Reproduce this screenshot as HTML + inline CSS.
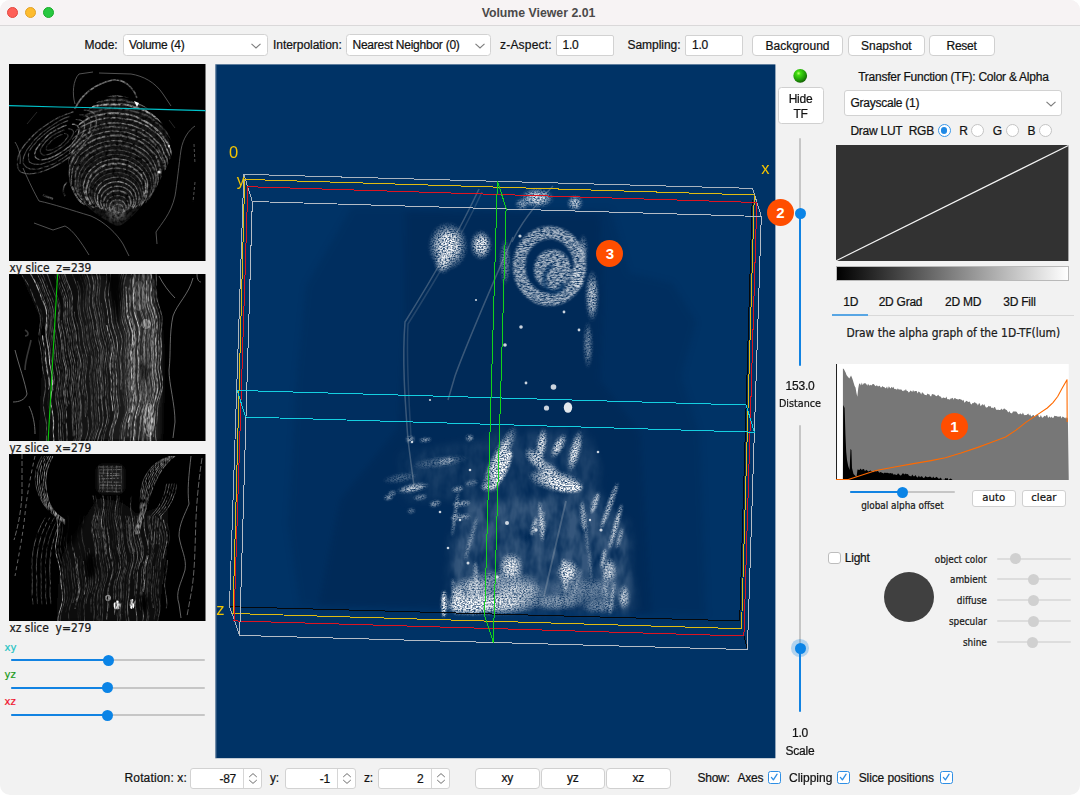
<!DOCTYPE html>
<html lang="en"><head><meta charset="utf-8"><title>Volume Viewer 2.01</title>
<style>
html,body{margin:0;padding:0;background:#fff;}
body{width:1080px;height:795px;overflow:hidden;position:relative;font-family:"Liberation Sans",sans-serif;font-size:12px;letter-spacing:-0.25px;color:#121212;-webkit-text-stroke:0.22px #121212;}
#win{position:absolute;left:0;top:0;width:1080px;height:795px;background:#f2f2f2;border-radius:10px;overflow:hidden;}
#tb{position:absolute;left:0;top:0;width:1080px;height:25px;background:#f7f3f4;border-bottom:1.5px solid #dad8d9;}
#tb .t{position:absolute;left:0;width:1077px;top:5.5px;text-align:center;font-weight:bold;font-size:12.3px;letter-spacing:0;color:#4b4949;-webkit-text-stroke:0;}
.tl{position:absolute;top:6.9px;width:11.2px;height:11.2px;border-radius:50%;box-sizing:border-box;}
.a{position:absolute;white-space:pre;line-height:14px;}
.lg{font-family:"DejaVu Sans Condensed","DejaVu Sans",sans-serif;letter-spacing:0;}
.box{position:absolute;box-sizing:border-box;background:#fff;border:1px solid #d2d2d2;border-radius:3.5px;}
.btn{position:absolute;box-sizing:border-box;background:#fff;border:1px solid #d0d0d0;border-radius:4px;text-align:center;}
.btn span,.box span{position:absolute;white-space:pre;line-height:14px;}
.chev{position:absolute;width:12px;height:8px;}
.trk{position:absolute;height:2px;border-radius:1px;background:#c6c6c6;}
.trkb{position:absolute;height:2px;border-radius:1px;background:#1283e2;}
.vtrk{position:absolute;width:2px;border-radius:1px;background:#c6c6c6;}
.vtrkb{position:absolute;width:2px;border-radius:1px;background:#1283e2;}
.th{position:absolute;width:11px;height:11px;border-radius:50%;background:#0b84e6;}
.thd{position:absolute;width:11px;height:11px;border-radius:50%;background:#d0d0d0;}
.trkd{position:absolute;height:2px;border-radius:1px;background:#dddddd;}
.cb{position:absolute;box-sizing:border-box;width:13px;height:13px;border:1.3px solid #2f8fe4;border-radius:2.5px;background:#fff;}
.rad{position:absolute;box-sizing:border-box;width:13px;height:13px;border:1px solid #c4c4c4;border-radius:50%;background:#fff;}
.badge{-webkit-text-stroke:0;position:absolute;width:27px;height:27px;border-radius:50%;background:#ff4e00;color:#fff;font-weight:bold;font-size:15px;letter-spacing:0;text-align:center;line-height:27px;}
svg{position:absolute;display:block;}
</style></head><body><div id="win">
<div id="tb"><div class="tl" style="left:7px;background:#fe5f57;border:0.6px solid #e2463f"></div><div class="tl" style="left:25.1px;background:#febc2e;border:0.6px solid #e0a028"></div><div class="tl" style="left:43.2px;background:#28c840;border:0.6px solid #1aab29"></div><div class="t">Volume Viewer 2.01</div></div>
<!-- toolbar -->
<div class="a" style="left:84.5px;top:38px;letter-spacing:-0.05px">Mode:</div>
<div class="box" style="left:123px;top:34px;width:145px;height:21.5px"><span style="left:5px;top:3px">Volume (4)</span><svg class="chev" style="left:126px;top:7px" viewBox="0 0 12 8"><path d="M1.5 1.8 L6 6 L10.5 1.8" fill="none" stroke="#7d7d7d" stroke-width="1.1"/></svg></div>
<div class="a" style="left:273px;top:38px;letter-spacing:-0.05px">Interpolation:</div>
<div class="box" style="left:345.5px;top:34px;width:145px;height:21.5px"><span style="left:6px;top:3px">Nearest Neighbor (0)</span><svg class="chev" style="left:127px;top:7px" viewBox="0 0 12 8"><path d="M1.5 1.8 L6 6 L10.5 1.8" fill="none" stroke="#7d7d7d" stroke-width="1.1"/></svg></div>
<div class="a" style="left:500px;top:38px;letter-spacing:0.2px">z-Aspect:</div>
<div class="box" style="left:555.5px;top:34.5px;width:58px;height:21px;border-radius:2px"><span style="left:6px;top:2.5px">1.0</span></div>
<div class="a" style="left:627.5px;top:38px;letter-spacing:-0.05px">Sampling:</div>
<div class="box" style="left:685px;top:34.5px;width:58px;height:21px;border-radius:2px"><span style="left:6px;top:2.5px">1.0</span></div>
<div class="btn" style="left:752px;top:35px;width:90.5px;height:20.5px"><span style="left:12.5px;top:2.5px;letter-spacing:0">Background</span></div>
<div class="btn" style="left:847.5px;top:35px;width:77px;height:20.5px"><span style="left:12.5px;top:2.5px;letter-spacing:0">Snapshot</span></div>
<div class="btn" style="left:929px;top:35px;width:65.5px;height:20.5px"><span style="left:16.5px;top:2.5px">Reset</span></div>
<svg style="left:9px;top:64px;width:196.5px;height:197px" viewBox="0 0 196.5 197"><defs>
<filter id="gxy" x="0" y="0" width="100%" height="100%" color-interpolation-filters="sRGB"><feTurbulence type="fractalNoise" baseFrequency="0.3" numOctaves="2" seed="4" result="n"/><feColorMatrix in="n" type="matrix" values="0 0 0 0 1 0 0 0 0 1 0 0 0 0 1 2.0 0 0 0 -0.3" result="a"/><feComposite in="SourceGraphic" in2="a" operator="in" result="c"/><feGaussianBlur in="c" stdDeviation="0.45"/></filter>
<clipPath id="cxy"><path d="M106 31 C92 32 78 44 70 60 C60 78 58 96 60 114 C62 134 80 150 98 160 C104 164 110 166 114 162 C128 152 142 136 150 118 C158 102 166 92 162 76 C154 54 130 32 106 31 Z"/></clipPath>
<radialGradient id="core"><stop offset="0" stop-color="#bbb" stop-opacity="0.7"/><stop offset="0.6" stop-color="#888" stop-opacity="0.3"/><stop offset="1" stop-color="#555" stop-opacity="0"/></radialGradient>
</defs><rect width="196.5" height="197" fill="#000"/><g filter="url(#gxy)"><path d="M106 33 C92 34 80 46 72 62 C62 80 60 96 62 114 C64 132 82 148 100 158 C106 162 110 163 114 160 C128 150 140 134 148 118 C156 102 164 92 160 76 C152 56 130 34 106 33 Z" fill="#1d1d1d" opacity="0.9"/><g clip-path="url(#cxy)" fill="none" stroke-linecap="round"><path d="M104.0 148.5 L103.7 148.1 L103.4 147.9 L103.2 147.3 L103.1 146.7 L103.1 146.2 L103.1 145.5 L103.2 145.0 L103.3 144.6 L103.4 144.2 L103.7 143.5 L103.9 142.9 L104.3 142.3 L104.6 142.2 L104.9 141.9 L105.4 141.3 L105.8 141.3 L106.2 141.3 L106.8 141.1 L107.3 140.9 L107.9 140.6 L108.4 140.3 L109.0 140.3 L109.5 140.2 L110.0 140.2 L110.5 140.3 L111.0 140.3 L111.5 140.7 L112.0 141.0 L112.5 141.5 L112.9 141.9 L113.3 142.4 L113.6 142.8 L113.9 143.4 L114.1 143.8 L114.3 144.2 L114.5 145.0 L114.6 145.7 L114.7 146.4 L114.7 146.9 L114.5 147.2 L114.3 147.5 L114.1 147.8 L113.8 148.0 L113.5 148.6" stroke="#ababab" stroke-width="1.1" opacity="0.55"/><path d="M101.6 147.3 L101.3 146.3 L100.9 145.9 L100.7 145.1 L100.4 144.8 L100.4 143.8 L100.4 143.0 L100.4 142.5 L100.5 141.7 L100.7 141.1 L101.0 140.2 L101.3 139.7 L101.8 139.0 L102.3 138.4 L102.9 137.7 L103.5 137.2 L104.1 137.0 L104.9 136.5 L105.6 136.4 L106.4 135.9 L107.1 135.8 L107.9 135.8 L108.8 135.8 L109.6 135.8 L110.4 135.9 L111.2 136.3 L112.0 136.7 L112.7 136.9 L113.4 137.3 L114.0 137.7 L114.7 138.4 L115.2 138.7 L115.7 139.5 L116.2 140.3 L116.6 141.0 L116.9 141.9 L117.0 142.3 L117.0 142.8 L117.2 143.8 L117.1 144.6 L117.0 145.3 L116.6 145.7 L116.3 146.1 L115.9 146.8 L115.4 147.2" stroke="#c6c6c6" stroke-width="1.3" opacity="0.55"/><path d="M99.3 146.4 L98.9 145.3 L98.4 144.6 L98.0 143.6 L97.7 142.9 L97.6 141.9 L97.5 141.0 L97.4 140.3 L97.6 139.3 L97.8 138.4 L98.1 137.7 L98.7 136.6 L99.3 135.6 L99.9 135.0 L100.5 134.4 L101.4 133.6 L102.4 132.9 L103.2 132.5 L104.2 132.3 L105.3 131.8 L106.3 131.7 L107.4 131.6 L108.5 131.6 L109.6 131.6 L110.7 131.6 L111.7 131.6 L112.8 132.2 L113.7 132.5 L114.7 133.1 L115.5 133.5 L116.4 134.3 L117.1 135.1 L117.7 135.8 L118.2 136.5 L118.7 137.5 L118.9 138.2 L119.1 139.0 L119.4 140.1 L119.6 141.3 L119.5 142.3 L119.3 143.1 L119.2 144.4 L118.7 145.0 L118.1 145.6 L117.5 146.3" stroke="#b1b1b1" stroke-width="1.2" opacity="0.42"/><path d="M97.0 145.8 L96.3 144.8 L95.5 144.1 L95.2 142.7 L95.0 141.3 L94.7 140.1 L94.7 138.9 L94.6 137.9 L94.8 136.7 L94.9 135.8 L95.3 134.7 L95.8 133.7 L96.5 132.6 L97.4 131.5 L98.4 130.5 L99.5 129.5 L100.6 128.9 L101.8 128.1 L103.0 127.5 L104.3 127.1 L105.6 126.8 L106.9 126.6 L108.2 126.5 L109.5 126.6 L110.8 126.7 L112.1 127.2 L113.5 127.6 L114.6 128.1 L115.9 128.8 L117.0 129.5 L117.9 130.2 L118.8 131.1 L119.5 131.9 L120.3 133.1 L121.1 134.4 L121.4 135.3 L121.7 136.5 L121.7 137.4 L121.9 138.8 L121.8 140.0 L121.5 140.9 L121.0 141.8 L120.5 142.8 L119.9 143.7 L119.3 144.7" stroke="#adadad" stroke-width="1.7" opacity="0.59"/><path d="M94.7 145.5 L93.7 144.3 L93.0 142.9 L92.3 141.8 L92.1 140.0 L91.6 138.8 L91.8 137.0 L91.7 135.7 L91.9 134.3 L92.4 132.8 L92.7 131.6 L93.4 130.2 L94.1 129.0 L94.9 128.0 L96.1 126.8 L97.5 125.7 L98.8 124.8 L100.1 124.1 L101.6 123.4 L103.1 122.8 L104.6 122.6 L106.2 122.4 L107.8 122.2 L109.5 122.4 L111.1 122.5 L112.7 122.9 L114.2 123.3 L115.7 123.8 L117.2 124.6 L118.6 125.6 L119.9 126.6 L121.0 127.6 L122.0 128.8 L122.7 129.9 L123.2 131.1 L123.8 132.4 L124.4 134.0 L124.8 135.6 L124.9 137.1 L125.0 138.8 L124.5 140.0 L123.9 141.1 L123.3 142.4 L122.5 143.5 L121.6 144.5" stroke="#acacac" stroke-width="1.3" opacity="0.66"/><path d="M92.5 144.8 L91.4 143.6 L90.3 142.3 L89.5 140.7 L89.1 138.9 L88.6 137.4 L88.6 135.5 L88.6 133.9 L88.7 132.2 L89.2 130.4 L89.9 128.8 L90.5 127.3 L91.4 125.8 L92.5 124.5 L93.8 123.1 L95.3 121.9 L96.6 120.9 L98.3 119.9 L99.9 119.2 L101.7 118.6 L103.5 118.2 L105.5 117.9 L107.4 117.7 L109.3 117.7 L111.2 118.0 L113.0 118.3 L114.8 118.8 L116.4 119.4 L118.2 120.3 L119.7 121.2 L121.2 122.4 L122.6 123.7 L123.8 125.0 L124.6 126.3 L125.3 127.7 L126.2 129.4 L126.7 131.1 L127.2 133.0 L127.3 134.6 L127.5 136.6 L126.9 137.9 L126.6 139.8 L126.0 141.5 L124.9 142.7 L123.9 144.0" stroke="#d4d4d4" stroke-width="1.3" opacity="0.63"/><path d="M90.7 143.8 L89.2 142.7 L88.4 140.6 L87.5 139.0 L86.7 137.3 L86.2 135.4 L85.7 133.8 L85.8 131.7 L86.1 129.7 L86.2 128.1 L87.1 126.0 L87.7 124.4 L88.6 122.7 L89.6 121.2 L91.3 119.6 L93.0 118.1 L94.7 116.9 L96.7 115.8 L98.6 114.9 L100.5 114.2 L102.5 113.7 L104.7 113.3 L106.9 113.2 L109.1 113.2 L111.2 113.4 L113.3 113.8 L115.3 114.3 L117.3 115.1 L119.2 116.0 L121.2 117.2 L122.7 118.4 L124.4 119.8 L125.7 121.3 L126.6 122.8 L127.6 124.5 L128.5 126.4 L129.4 128.5 L129.7 130.3 L130.1 132.5 L130.2 134.6 L129.7 136.5 L129.2 138.4 L128.3 140.0 L127.5 142.0 L126.3 143.6" stroke="#d0d0d0" stroke-width="1.1" opacity="0.51"/><path d="M88.6 143.7 L87.2 141.7 L85.8 140.1 L84.7 138.3 L83.8 136.2 L83.0 134.4 L82.7 132.2 L82.8 129.8 L83.1 127.6 L83.3 125.6 L83.7 123.7 L84.9 121.5 L85.8 119.6 L86.9 117.8 L88.6 116.1 L90.4 114.5 L92.5 113.0 L94.6 111.8 L96.8 110.7 L99.0 109.9 L101.5 109.3 L103.9 108.8 L106.4 108.6 L108.8 108.6 L111.3 108.8 L113.8 109.3 L116.1 109.9 L118.5 110.8 L120.5 111.8 L122.5 113.0 L124.4 114.4 L126.3 116.0 L128.1 117.8 L129.2 119.6 L130.3 121.5 L130.8 123.4 L131.5 125.4 L132.1 127.7 L132.5 130.1 L132.3 132.2 L131.8 134.2 L131.0 136.0 L130.3 138.1 L129.5 140.5 L127.9 141.9" stroke="#7a7a7a" stroke-width="1.0" opacity="0.48"/><path d="M87.0 142.7 L85.4 140.7 L83.7 139.1 L82.7 136.8 L81.7 134.6 L80.9 132.4 L80.4 130.1 L79.9 128.0 L80.0 125.6 L80.2 123.3 L80.8 121.0 L81.6 118.8 L83.3 116.4 L84.7 114.4 L86.2 112.5 L88.1 110.7 L90.3 109.1 L92.4 107.7 L94.9 106.5 L97.6 105.6 L100.3 104.9 L103.0 104.4 L105.8 104.1 L108.5 104.1 L111.3 104.3 L114.0 104.7 L116.6 105.4 L119.1 106.4 L121.5 107.5 L124.0 108.9 L125.9 110.4 L128.0 112.1 L129.5 114.0 L130.7 115.9 L132.3 118.1 L133.0 120.2 L133.5 122.4 L133.9 124.7 L134.2 127.1 L134.5 129.8 L134.2 132.2 L133.7 134.7 L132.5 136.7 L131.5 139.0 L130.2 141.3" stroke="#848484" stroke-width="1.2" opacity="0.74"/><path d="M84.6 143.4 L82.4 141.7 L81.1 138.9 L79.7 136.5 L78.4 134.2 L77.7 131.6 L77.0 129.0 L77.2 126.1 L77.6 123.2 L78.3 120.5 L79.3 117.9 L80.0 115.5 L81.1 113.2 L82.5 111.0 L84.5 108.9 L86.6 107.0 L88.9 105.3 L91.0 103.7 L93.4 102.4 L96.1 101.2 L99.1 100.5 L102.1 100.0 L105.1 99.5 L108.2 99.5 L111.2 99.7 L114.2 100.2 L117.1 101.0 L119.9 101.9 L122.6 103.2 L125.2 104.7 L127.2 106.3 L129.5 108.2 L131.7 110.3 L133.1 112.5 L134.4 114.8 L135.8 117.3 L136.5 119.9 L136.7 122.3 L136.7 124.7 L136.7 127.4 L135.9 129.7 L135.7 132.7 L135.0 135.5 L133.9 138.0 L132.5 140.6" stroke="#c8c8c8" stroke-width="1.8" opacity="0.68"/><path d="M83.4 142.3 L81.2 140.2 L79.4 137.7 L77.5 135.5 L76.4 132.7 L75.8 129.6 L74.8 127.1 L74.8 124.1 L74.3 121.5 L75.1 118.5 L75.9 115.6 L76.8 113.0 L78.2 110.3 L79.8 107.9 L81.9 105.5 L84.2 103.4 L86.7 101.5 L89.1 99.8 L91.9 98.3 L95.0 97.2 L97.9 96.1 L101.0 95.4 L104.3 94.9 L107.7 94.9 L111.0 95.2 L114.4 95.6 L117.6 96.4 L120.5 97.6 L123.5 98.9 L126.1 100.5 L128.4 102.3 L130.8 104.3 L133.0 106.5 L134.6 108.8 L135.9 111.3 L137.2 113.9 L138.3 116.7 L138.6 119.4 L138.6 122.1 L138.5 124.8 L138.2 127.7 L137.7 130.6 L136.9 133.7 L135.7 136.5 L133.6 138.4" stroke="#999999" stroke-width="1.2" opacity="0.85"/><path d="M81.5 142.5 L79.1 140.1 L76.6 138.1 L74.8 135.3 L72.9 132.7 L71.8 129.6 L70.9 126.6 L71.1 123.0 L71.1 119.8 L71.2 116.8 L72.5 113.4 L73.2 110.6 L75.0 107.6 L76.8 104.8 L79.2 102.2 L81.5 99.9 L84.0 97.7 L87.1 95.9 L89.8 94.2 L93.1 92.8 L96.5 91.7 L100.0 90.9 L103.6 90.5 L107.3 90.5 L110.9 90.6 L114.5 91.1 L117.9 92.0 L121.4 93.1 L124.5 94.5 L127.2 96.3 L129.9 98.2 L132.2 100.4 L134.3 102.7 L136.7 105.3 L138.4 108.1 L140.2 111.1 L141.5 114.2 L141.6 117.0 L142.5 120.5 L142.8 123.9 L141.7 126.6 L141.3 130.0 L139.9 132.9 L138.3 135.6 L136.8 138.8" stroke="#979797" stroke-width="1.0" opacity="0.45"/><path d="M79.2 142.2 L76.3 140.0 L74.4 136.7 L72.0 134.2 L70.8 130.7 L69.4 127.6 L69.2 123.9 L68.8 120.5 L69.2 117.0 L69.1 113.9 L70.0 110.5 L71.4 107.3 L73.0 104.2 L75.1 101.3 L77.2 98.6 L79.5 96.1 L82.1 93.7 L85.1 91.7 L88.4 89.9 L91.8 88.4 L95.4 87.1 L99.3 86.5 L103.2 86.1 L107.1 86.1 L110.9 86.2 L114.8 86.8 L118.4 87.7 L122.1 88.8 L125.8 90.3 L128.9 92.1 L132.0 94.2 L135.0 96.6 L137.6 99.2 L139.4 102.0 L141.0 104.9 L142.2 108.0 L143.9 111.4 L144.5 114.7 L145.0 118.2 L144.5 121.3 L144.2 124.8 L143.4 128.2 L141.6 130.9 L139.7 133.7 L137.4 136.1" stroke="#7c7c7c" stroke-width="1.1" opacity="0.67"/><path d="M77.7 140.6 L75.3 137.5 L72.6 135.0 L70.4 132.0 L68.5 129.0 L67.3 125.4 L66.4 122.0 L66.3 118.2 L66.3 114.6 L66.3 111.3 L66.7 107.9 L68.5 104.3 L70.5 100.9 L72.0 97.9 L74.3 94.9 L76.7 92.2 L80.1 89.7 L83.4 87.5 L87.1 85.7 L90.6 84.0 L94.6 82.9 L98.6 81.9 L102.7 81.2 L107.0 81.2 L111.2 81.4 L115.4 81.9 L119.6 82.8 L123.5 84.2 L127.1 85.9 L130.3 88.0 L133.9 90.2 L136.4 92.8 L138.7 95.6 L141.2 98.6 L143.2 101.7 L145.0 105.1 L145.9 108.5 L147.0 112.2 L146.8 115.5 L146.4 118.9 L146.2 122.7 L144.8 125.8 L143.4 129.1 L142.1 132.7 L140.2 136.1" stroke="#9c9c9c" stroke-width="1.8" opacity="0.51"/><path d="M75.1 140.7 L72.3 137.5 L69.3 134.9 L67.3 131.3 L65.6 127.7 L64.1 124.1 L62.7 120.6 L62.1 116.8 L62.5 112.7 L63.0 108.8 L63.3 105.2 L64.9 101.4 L67.1 97.8 L68.8 94.4 L71.2 91.2 L74.3 88.2 L78.1 85.7 L81.4 83.3 L85.5 81.4 L89.4 79.7 L93.6 78.3 L97.9 77.3 L102.3 76.6 L106.8 76.6 L111.3 76.9 L115.6 77.7 L119.9 78.7 L123.9 80.2 L127.6 82.1 L131.3 84.1 L135.2 86.3 L138.6 89.0 L141.1 92.0 L143.1 95.1 L144.9 98.5 L146.4 101.9 L147.2 105.4 L148.7 109.3 L149.1 113.1 L149.2 117.0 L148.5 120.7 L147.6 124.5 L146.0 128.0 L144.0 131.3 L141.4 134.2" stroke="#a0a0a0" stroke-width="1.1" opacity="0.72"/><path d="M73.5 139.3 L70.0 136.7 L67.1 133.6 L65.1 129.8 L63.5 125.8 L61.6 122.3 L60.5 118.3 L59.7 114.4 L59.8 110.3 L60.5 106.1 L60.8 102.3 L62.1 98.3 L64.1 94.5 L66.5 90.9 L69.1 87.5 L72.1 84.4 L75.3 81.4 L79.4 79.0 L83.4 76.7 L87.8 74.9 L92.2 73.4 L96.9 72.3 L101.8 71.6 L106.7 71.4 L111.6 71.5 L116.5 72.3 L121.1 73.6 L125.7 75.1 L130.1 77.0 L133.9 79.4 L137.5 82.1 L140.4 85.2 L143.7 88.3 L146.8 91.7 L148.7 95.4 L149.9 99.2 L150.8 103.0 L151.6 107.0 L151.7 110.9 L152.3 115.3 L151.1 119.0 L149.8 122.8 L147.9 126.3 L146.3 130.2 L144.3 134.1" stroke="#8e8e8e" stroke-width="1.8" opacity="0.78"/><path d="M71.5 138.5 L68.1 135.4 L64.8 132.4 L62.6 128.5 L60.9 124.3 L59.4 120.2 L58.1 116.2 L57.4 112.1 L57.3 107.8 L57.7 103.5 L58.8 99.3 L59.7 95.3 L61.9 91.3 L63.8 87.4 L66.3 83.8 L69.7 80.5 L73.2 77.3 L77.4 74.7 L81.7 72.3 L86.5 70.5 L91.4 69.1 L96.3 67.8 L101.4 67.2 L106.5 67.0 L111.6 67.7 L116.7 68.2 L121.5 69.5 L126.0 71.3 L130.2 73.5 L134.7 75.6 L139.0 78.2 L142.8 81.2 L146.3 84.6 L149.2 88.3 L150.8 92.2 L153.2 96.3 L154.9 100.6 L156.1 105.0 L156.7 109.6 L156.1 113.9 L154.8 117.9 L153.4 122.0 L152.1 126.4 L149.6 130.1 L147.2 134.1" stroke="#8a8a8a" stroke-width="1.2" opacity="0.83"/><path d="M68.9 138.6 L65.2 135.4 L61.5 132.3 L59.3 127.8 L57.2 123.6 L56.2 118.9 L54.6 114.7 L54.8 109.8 L54.2 105.5 L54.2 101.1 L54.9 96.7 L57.2 92.2 L59.7 88.0 L61.9 84.0 L65.4 80.3 L68.8 76.9 L72.6 73.8 L76.3 70.8 L80.8 68.4 L85.4 66.2 L90.6 64.8 L95.7 63.6 L101.0 63.0 L106.4 62.6 L111.7 63.3 L117.0 63.8 L122.0 65.3 L126.9 66.9 L131.7 69.0 L135.8 71.7 L140.3 74.3 L143.8 77.6 L146.9 81.2 L149.3 84.9 L151.6 88.9 L153.7 93.1 L155.6 97.4 L156.4 101.9 L157.2 106.5 L156.5 110.8 L155.8 115.2 L154.6 119.6 L153.7 124.5 L151.9 129.0 L149.2 133.0" stroke="#797979" stroke-width="1.8" opacity="0.76"/><path d="M66.8 137.9 L63.4 134.0 L60.6 129.7 L57.4 126.1 L54.5 122.1 L52.3 117.9 L51.0 113.2 L49.9 108.5 L50.7 103.3 L51.2 98.6 L51.7 93.9 L53.3 89.2 L55.1 84.7 L57.9 80.4 L61.4 76.4 L65.9 72.8 L70.4 69.7 L74.9 66.9 L79.9 64.6 L84.9 62.6 L90.1 61.1 L95.3 59.9 L100.7 59.0 L106.2 58.8 L111.7 59.1 L117.0 60.2 L122.4 61.2 L127.3 63.1 L132.4 65.1 L136.8 67.8 L140.8 70.8 L144.3 74.2 L148.0 77.7 L151.5 81.5 L153.7 85.7 L155.2 90.0 L157.8 94.6 L158.8 99.3 L159.8 104.2 L159.4 108.9 L159.2 113.9 L158.5 119.0 L156.0 123.0 L153.1 127.0 L149.9 130.6" stroke="#d0d0d0" stroke-width="1.3" opacity="0.57"/><path d="M64.8 137.1 L61.6 132.7 L58.2 128.7 L54.9 124.8 L51.7 120.8 L49.5 116.2 L48.1 111.3 L47.5 106.2 L48.5 100.8 L49.3 95.7 L50.7 90.8 L52.1 86.1 L54.9 81.5 L57.8 77.2 L60.9 73.1 L64.2 69.2 L68.1 65.5 L72.7 62.4 L78.1 60.1 L83.1 57.7 L88.5 55.7 L94.3 54.5 L100.2 54.0 L106.1 53.8 L111.9 54.5 L117.7 55.1 L123.6 56.0 L129.0 58.0 L134.4 60.2 L139.6 62.8 L143.8 66.3 L148.4 69.7 L152.2 73.7 L154.8 78.0 L156.8 82.5 L158.7 87.1 L160.5 91.9 L161.9 96.9 L162.1 101.8 L162.7 107.2 L161.6 112.0 L160.1 116.9 L157.6 121.2 L156.0 126.4 L152.4 130.1" stroke="#c0c0c0" stroke-width="1.5" opacity="0.68"/><path d="M62.5 136.7 L58.8 132.4 L54.6 128.8 L50.8 124.8 L48.0 120.1 L46.2 114.9 L45.8 109.1 L44.7 104.1 L45.2 98.6 L45.2 93.4 L47.0 88.1 L48.8 83.1 L50.8 78.2 L54.4 73.6 L57.9 69.3 L62.5 65.5 L67.3 62.1 L72.3 59.1 L76.8 55.9 L81.9 53.3 L87.6 51.4 L93.7 50.3 L99.8 49.4 L105.9 49.0 L112.1 49.6 L118.2 50.4 L124.3 51.6 L129.6 54.0 L134.8 56.6 L139.9 59.4 L144.3 62.8 L148.6 66.5 L152.6 70.4 L155.6 74.8 L158.6 79.3 L160.6 84.1 L162.6 89.1 L163.5 94.2 L164.4 99.5 L163.5 104.4 L163.3 109.8 L161.4 114.5 L160.4 120.1 L157.9 125.0 L154.7 129.4" stroke="#acacac" stroke-width="1.8" opacity="0.86"/><path d="M60.4 136.1 L56.3 131.8 L52.9 127.1 L49.0 122.9 L46.5 117.8 L43.9 112.9 L42.4 107.5 L41.3 102.1 L42.2 96.2 L43.7 90.6 L44.0 85.3 L46.4 80.0 L48.9 74.9 L52.1 70.1 L56.5 65.8 L59.9 61.5 L64.8 57.8 L69.7 54.4 L75.2 51.6 L81.0 49.3 L87.0 47.5 L93.0 45.9 L99.3 44.7 L105.8 44.2 L112.2 45.0 L118.7 45.6 L124.7 47.4 L131.0 49.1 L137.1 51.4 L142.4 54.6 L146.8 58.4 L151.9 62.1 L155.9 66.5 L159.6 71.1 L163.2 76.0 L166.0 81.3 L168.3 86.8 L169.4 92.4 L170.1 98.2 L169.1 103.6 L168.0 109.0 L166.2 114.4 L163.2 119.1 L160.7 124.3 L157.1 128.8" stroke="#878787" stroke-width="1.8" opacity="0.45"/><path d="M57.9 135.9 L54.1 130.8 L50.2 126.3 L46.1 122.0 L44.4 116.0 L42.8 110.3 L41.6 104.7 L41.0 99.0 L41.6 93.3 L41.1 87.9 L41.7 82.4 L43.9 76.9 L46.7 71.7 L49.7 66.7 L54.2 62.2 L59.0 58.1 L63.0 53.9 L68.4 50.6 L73.9 47.5 L79.5 44.6 L85.5 42.2 L92.2 40.9 L98.9 40.5 L105.6 40.5 L112.3 40.4 L119.1 41.0 L125.4 43.0 L131.9 44.8 L137.7 47.6 L143.2 50.8 L148.0 54.7 L153.3 58.5 L158.3 62.8 L161.3 67.7 L164.6 72.8 L166.4 78.2 L169.0 83.8 L169.1 89.3 L168.9 94.7 L169.4 100.6 L168.2 106.1 L167.5 112.1 L166.0 118.0 L163.3 123.4 L159.0 127.7" stroke="#d1d1d1" stroke-width="1.9" opacity="0.79"/><path d="M56.4 134.6 L52.3 129.6 L47.5 125.5 L44.8 119.7 L41.5 114.7 L39.8 108.8 L37.8 103.3 L37.0 97.3 L37.4 91.3 L38.4 85.3 L39.0 79.6 L41.0 73.9 L44.5 68.5 L47.6 63.3 L50.7 58.2 L54.8 53.4 L60.5 49.6 L66.4 46.2 L72.6 43.4 L78.6 40.6 L85.0 38.6 L91.9 37.5 L98.5 36.1 L105.5 36.3 L112.4 36.1 L119.1 37.7 L125.8 39.0 L132.3 41.1 L138.4 43.8 L144.3 47.0 L149.3 50.9 L155.0 54.7 L158.9 59.5 L162.2 64.5 L166.0 69.7 L167.7 75.2 L170.4 80.9 L171.0 86.6 L172.5 92.7 L172.5 98.8 L172.4 105.1 L170.7 111.0 L167.2 115.9 L165.0 121.9 L160.6 126.2" stroke="#808080" stroke-width="1.5" opacity="0.72"/><path d="M54.3 133.8 L49.3 129.5 L44.6 124.9 L41.0 119.4 L38.2 113.6 L35.3 108.0 L33.6 101.9 L33.1 95.6 L32.3 89.5 L34.0 83.0 L35.0 76.9 L38.1 70.9 L40.8 65.1 L44.9 59.8 L49.0 54.7 L53.3 49.9 L58.2 45.4 L63.8 41.4 L70.4 38.4 L77.0 35.8 L84.0 34.0 L91.0 32.4 L98.1 31.5 L105.3 31.8 L112.5 32.0 L119.7 32.7 L126.7 34.2 L133.7 36.1 L139.8 39.4 L145.4 43.0 L150.4 47.2 L155.7 51.4 L160.3 56.0 L164.3 61.1 L167.3 66.5 L170.8 72.2 L172.0 78.0 L174.3 84.2 L175.0 90.5 L174.9 96.7 L174.5 103.1 L172.2 108.8 L169.1 114.2 L165.8 119.6 L161.5 124.2" stroke="#a0a0a0" stroke-width="1.7" opacity="0.77"/><path d="M51.6 134.0 L46.2 129.5 L42.0 124.0 L38.1 118.5 L35.2 112.4 L33.2 106.0 L32.3 99.4 L31.4 93.0 L31.0 86.7 L31.6 80.3 L33.2 74.0 L35.9 67.8 L38.8 61.9 L42.0 56.2 L46.0 50.8 L50.3 45.6 L56.6 41.6 L62.3 37.4 L68.7 34.0 L76.0 31.7 L82.8 29.2 L90.2 27.6 L97.6 26.1 L105.2 26.7 L112.6 27.2 L120.0 28.2 L127.0 30.4 L134.0 32.5 L140.7 35.4 L147.5 38.4 L154.0 42.1 L159.6 46.7 L164.6 51.8 L169.4 57.1 L172.8 63.0 L174.8 69.2 L175.8 75.4 L177.9 81.9 L178.1 88.3 L176.8 94.4 L175.3 100.5 L173.4 106.6 L172.1 113.3 L169.7 119.8 L165.1 124.7" stroke="#8c8c8c" stroke-width="1.4" opacity="0.72"/><path d="M50.6 131.9 L45.7 126.9 L40.6 122.0 L36.0 116.9 L32.7 110.8 L29.6 104.8 L28.2 98.0 L27.8 91.2 L27.1 84.6 L28.4 77.8 L29.4 71.2 L32.6 64.8 L36.1 58.6 L40.4 53.0 L44.6 47.5 L50.1 42.7 L56.0 38.3 L62.2 34.5 L68.5 30.9 L75.4 28.2 L82.5 25.8 L89.6 23.4 L97.2 22.2 L105.0 21.5 L112.8 22.5 L120.4 23.7 L127.6 26.0 L135.0 28.1 L141.8 31.2 L148.1 35.0 L153.4 39.4 L158.6 44.1 L163.3 49.1 L167.6 54.5 L172.4 60.1 L175.9 66.2 L177.5 72.6 L178.7 79.1 L178.6 85.5 L179.6 92.5 L178.3 98.9 L177.2 105.7 L175.0 112.3 L172.4 118.9 L167.2 123.7" stroke="#a1a1a1" stroke-width="1.8" opacity="0.62"/><path d="M47.2 132.9 L42.2 127.3 L38.0 121.2 L33.2 115.8 L29.7 109.6 L27.8 102.6 L25.9 95.9 L25.1 89.0 L25.9 81.9 L26.5 75.0 L28.9 68.3 L31.7 61.8 L34.7 55.6 L38.3 49.6 L42.3 43.8 L47.4 38.6 L53.1 33.8 L59.7 29.8 L66.5 26.2 L73.8 23.3 L81.0 20.4 L88.7 18.3 L96.8 17.3 L104.9 17.2 L112.9 18.3 L120.8 19.3 L128.5 21.3 L135.6 24.2 L142.6 27.3 L149.6 30.8 L155.3 35.3 L161.7 39.7 L167.4 44.9 L171.8 50.7 L174.4 56.9 L178.2 63.2 L181.0 69.9 L182.7 76.8 L182.1 83.4 L182.8 90.6 L181.7 97.5 L179.4 104.0 L175.9 110.0 L173.3 116.8 L168.9 122.5" stroke="#c8c8c8" stroke-width="1.2" opacity="0.80"/><path d="M46.4 130.7 L40.8 125.6 L35.9 119.9 L30.7 114.5 L27.9 107.6 L24.9 101.0 L23.9 93.7 L21.8 87.0 L22.7 79.6 L22.8 72.6 L24.9 65.5 L26.9 58.7 L30.3 52.0 L33.9 45.7 L38.1 39.5 L43.4 33.8 L50.0 29.0 L57.2 25.0 L64.0 20.9 L72.0 18.1 L79.6 15.2 L87.7 13.0 L96.3 12.8 L104.8 12.0 L113.3 12.1 L121.5 13.9 L129.5 16.1 L137.7 18.4 L144.8 22.1 L152.1 25.8 L159.2 30.1 L164.2 35.7 L168.5 41.5 L172.8 47.5 L176.6 53.7 L179.4 60.3 L182.6 67.1 L185.1 74.2 L185.9 81.4 L185.2 88.5 L183.7 95.4 L182.7 102.9 L178.6 108.9 L175.6 115.7 L170.7 121.3" stroke="#818181" stroke-width="1.6" opacity="0.71"/></g><circle cx="108" cy="148" r="14" fill="url(#core)"/><g fill="none" stroke-linecap="round" transform="translate(48,78) rotate(-36)"><path d="M11.0 -2.4 L11.9 -1.7 L12.4 -1.1 L12.8 -0.1 L12.9 0.9 L12.4 1.5 L11.8 2.4 L10.3 2.7 L8.7 3.1 L7.2 3.6 L5.3 3.9 L3.3 4.1 L1.5 4.6 L-0.8 4.4 L-3.0 4.2 L-5.1 3.9 L-6.8 3.7 L-8.7 3.2 L-10.4 2.4 L-11.5 1.9 L-12.3 1.2 L-13.0 0.4 L-13.2 -0.2 L-12.9 -0.8 L-12.4 -1.5 L-11.5 -2.1 L-10.4 -2.7 L-8.9 -3.1 L-7.0 -3.3 L-5.4 -3.9 L-3.6 -4.3 L-1.3 -4.2 L0.6 -4.5 L2.8 -4.3 L4.9 -4.0 L6.9 -3.6 L8.8 -3.0" stroke="#828282" stroke-width="1.0" opacity="0.65"/><path d="M17.0 -3.9 L18.4 -2.7 L19.2 -1.5 L19.4 -0.4 L19.4 1.1 L18.8 2.3 L17.4 3.3 L15.6 4.3 L13.4 5.2 L10.8 5.9 L8.1 6.6 L4.9 6.9 L1.6 7.0 L-1.7 6.9 L-5.0 6.7 L-7.8 6.6 L-10.8 5.9 L-13.3 5.3 L-15.3 4.6 L-17.1 3.7 L-18.7 2.4 L-19.3 1.5 L-19.4 0.4 L-19.6 -1.1 L-19.0 -2.5 L-17.8 -3.6 L-15.9 -4.5 L-13.9 -5.5 L-11.3 -6.2 L-8.7 -7.0 L-5.6 -7.3 L-2.5 -7.7 L0.6 -7.8 L4.0 -7.5 L7.3 -6.9 L10.4 -6.2 L12.9 -5.5" stroke="#a3a3a3" stroke-width="1.3" opacity="0.45"/><path d="M23.0 -5.3 L24.7 -3.8 L25.7 -2.3 L26.0 -0.7 L25.9 1.2 L24.9 2.9 L23.4 4.7 L21.5 6.5 L18.6 7.8 L15.4 9.1 L11.7 10.1 L7.9 10.9 L3.4 11.0 L-1.2 10.9 L-5.7 10.5 L-9.7 10.1 L-13.7 9.2 L-17.1 8.3 L-20.4 6.8 L-23.1 5.2 L-24.6 3.9 L-25.6 2.4 L-26.4 0.4 L-26.3 -1.4 L-25.3 -3.1 L-23.6 -4.6 L-21.4 -6.2 L-18.4 -7.3 L-14.9 -8.4 L-11.1 -9.1 L-7.3 -10.1 L-3.4 -10.8 L0.9 -10.9 L5.5 -10.4 L9.7 -9.9 L13.4 -9.3 L17.1 -8.1" stroke="#a2a2a2" stroke-width="1.4" opacity="0.79"/><path d="M28.7 -7.0 L31.1 -4.8 L32.7 -2.6 L33.4 -0.2 L32.9 1.9 L31.5 3.9 L29.3 5.8 L26.8 8.1 L23.0 9.7 L18.9 11.2 L14.0 12.2 L8.8 13.0 L3.3 13.2 L-2.1 13.4 L-7.6 13.0 L-12.6 12.5 L-17.6 11.5 L-22.1 10.0 L-25.9 8.5 L-29.0 6.6 L-31.5 4.5 L-33.2 2.2 L-34.0 -0.2 L-33.3 -2.1 L-32.2 -4.4 L-30.4 -6.7 L-27.7 -8.7 L-24.0 -10.4 L-19.4 -11.4 L-14.9 -12.8 L-9.5 -13.3 L-4.2 -13.8 L1.2 -14.0 L6.8 -13.5 L12.0 -12.9 L16.6 -12.2 L21.2 -10.8" stroke="#bdbdbd" stroke-width="1.1" opacity="0.48"/><path d="M34.5 -8.6 L37.2 -6.2 L39.2 -3.3 L40.0 -0.5 L39.9 2.6 L38.2 5.0 L35.9 7.8 L32.7 10.4 L28.4 12.5 L23.3 14.3 L17.4 15.5 L11.0 16.2 L4.6 16.8 L-2.3 16.6 L-8.8 16.3 L-14.8 15.8 L-20.9 14.3 L-26.3 12.6 L-30.7 10.9 L-34.6 8.4 L-37.6 5.8 L-39.2 3.4 L-40.0 0.7 L-39.8 -2.3 L-38.4 -4.9 L-35.9 -7.4 L-32.3 -9.7 L-28.0 -11.7 L-22.7 -13.3 L-17.2 -14.9 L-10.9 -15.8 L-4.7 -16.5 L2.1 -16.5 L8.6 -16.1 L14.5 -15.8 L20.2 -14.8 L25.5 -13.2" stroke="#9d9d9d" stroke-width="1.2" opacity="0.51"/><path d="M40.8 -9.8 L44.1 -6.7 L46.1 -3.7 L46.8 -0.5 L46.2 2.5 L44.6 5.9 L41.8 9.0 L37.7 11.7 L32.5 14.1 L26.4 16.0 L19.6 17.5 L12.3 18.6 L4.7 19.3 L-3.0 19.4 L-10.6 19.0 L-18.0 17.9 L-24.9 16.5 L-31.2 14.5 L-36.7 12.1 L-41.1 9.5 L-44.5 6.4 L-46.8 3.1 L-47.2 0.3 L-46.6 -2.7 L-44.8 -5.8 L-42.3 -9.1 L-38.5 -12.1 L-33.7 -14.8 L-27.6 -16.8 L-20.9 -18.3 L-13.8 -19.6 L-6.2 -20.2 L1.8 -20.1 L9.5 -19.7 L17.0 -18.6 L24.2 -16.9 L30.6 -14.9" stroke="#767676" stroke-width="1.3" opacity="0.78"/></g><path d="M66 45 C72 30 88 19 104 16 C114 15 124 22 128 34" fill="none" stroke="#9a9a9a" stroke-width="1.7" opacity="0.8"/><path d="M58 118 C54 122 53 128 56 132" fill="none" stroke="#999" stroke-width="1.4" opacity="0.7"/><path d="M34 131 L44 135" stroke="#999" stroke-width="2.4" opacity="0.6"/></g><g fill="none" stroke="#a8a8a8" stroke-width="0.8" opacity="0.6"><path d="M66 40 C63 30 64 16 70 10 L84 8 M90 9 L122 10 C134 12 146 18 154 30 L162 42"/><path d="M186 62 C180 66 174 74 172 86 C170 100 168 120 166 132 C162 150 152 160 147 168 L148 180"/><path d="M185 80 L186 100 M186 118 L184 138" stroke-dasharray="3 2"/><path d="M6 78 C10 84 12 92 11 100 M14 104 C20 118 26 130 30 137 C44 140 62 146 82 152 C96 158 108 170 114 180 L120 192"/><path d="M25 159 L44 166 L56 162 C64 166 72 178 80 191"/><path d="M18 60 L28 48 M160 56 L166 64" opacity="0.5"/></g><path d="M125 37 L130 39 L128 43 Z" fill="#fff"/><circle cx="150" cy="108" r="1.6" fill="#ddd"/><circle cx="160" cy="82" r="1.2" fill="#ccc"/><path d="M0 41.6 L50 43 L100 44 L150 45.4 L196.5 46.6" stroke="#00c4cc" stroke-width="1.1" fill="none"/></svg><svg style="left:9px;top:274px;width:196.5px;height:167px" viewBox="0 0 196.5 167"><defs>
<filter id="gyz" x="0" y="0" width="100%" height="100%" color-interpolation-filters="sRGB"><feTurbulence type="fractalNoise" baseFrequency="0.6 0.18" numOctaves="2" seed="9" result="n"/><feColorMatrix in="n" type="matrix" values="0 0 0 0 1 0 0 0 0 1 0 0 0 0 1 2.4 0 0 0 -0.5" result="a"/><feComposite in="SourceGraphic" in2="a" operator="in" result="c"/><feGaussianBlur in="c" stdDeviation="0.3"/></filter>
<linearGradient id="byz" x1="0" x2="1" y1="0" y2="0"><stop offset="0" stop-color="#0c0c0c"/><stop offset="0.58" stop-color="#141414"/><stop offset="0.72" stop-color="#1f1f1f"/><stop offset="0.9" stop-color="#2c2c2c"/><stop offset="1" stop-color="#1a1a1a"/></linearGradient>
<filter id="b2"><feGaussianBlur stdDeviation="2"/></filter>
</defs><rect width="196.5" height="167" fill="#000"/><path d="M12 0 C20 20 30 40 36 56 C34 80 31 120 30 167 L152 167 C154 130 155 90 153 60 C150 40 146 20 143 0 Z" fill="url(#byz)" opacity="0.95" filter="url(#b2)"/><g filter="url(#gyz)"><g fill="none" stroke-linecap="round"><path d="M12.1 0.0 L16.3 6.0 L19.9 11.9 L22.5 17.9 L24.7 23.9 L27.1 29.8 L29.5 35.8 L31.2 41.8 L31.5 47.7 L30.8 53.7 L30.0 59.6 L29.9 65.6 L30.9 71.6 L32.1 77.5 L32.8 83.5 L33.2 89.5 L33.8 95.4 L34.9 101.4 L36.1 107.4 L36.5 113.3 L35.8 119.3 L34.7 125.2 L34.3 131.2 L35.0 137.2 L36.4 143.1 L37.3 149.1 L37.5 155.1 L37.3 161.0 L37.4 167.0" stroke="#a9a9a9" stroke-width="0.6" opacity="0.88"/><path d="M31.2 34.8 L31.9 36.6 L32.4 38.5 L32.8 40.3 L33.1 42.2 L33.3 44.0 L33.3 45.9 L33.2 47.8 L33.0 49.6 L32.8 51.5 L32.5 53.3 L32.2 55.2 L32.0 57.0 L31.9 58.9 L31.7 60.8 L31.7 62.6 L31.8 64.5 L32.0 66.3 L32.3 68.2 L32.7 70.1 L33.1 71.9 L33.5 73.8 L33.8 75.6 L34.2 77.5 L34.4 79.3 L34.6 81.2 L34.8 83.1 L34.9 84.9 L35.0 86.8" stroke="#dfdfdf" stroke-width="0.7" opacity="0.26"/><path d="M33.6 61.8 L33.7 63.7 L33.9 65.6 L34.2 67.5 L34.6 69.4 L35.0 71.3 L35.4 73.2 L35.8 75.1 L36.1 77.0 L36.3 78.9 L36.5 80.8 L36.6 82.7 L36.7 84.6 L36.8 86.6 L37.0 88.5 L37.1 90.4 L37.4 92.3 L37.7 94.2 L38.0 96.1 L38.4 98.0 L38.8 99.9 L39.3 101.8 L39.6 103.7 L40.0 105.6 L40.2 107.5 L40.3 109.4 L40.3 111.3 L40.1 113.2 L39.9 115.1" stroke="#f0f0f0" stroke-width="1.2" opacity="0.74"/><path d="M37.5 81.4 L37.6 83.6 L37.7 85.9 L37.9 88.2 L38.1 90.4 L38.4 92.7 L38.8 95.0 L39.3 97.2 L39.8 99.5 L40.3 101.8 L40.7 104.0 L41.1 106.3 L41.2 108.6 L41.2 110.8 L41.0 113.1 L40.7 115.4 L40.3 117.6 L39.9 119.9 L39.5 122.2 L39.2 124.4 L39.0 126.7 L39.0 129.0 L39.2 131.3 L39.6 133.5 L40.0 135.8 L40.5 138.1 L41.0 140.3 L41.4 142.6 L41.8 144.9" stroke="#909090" stroke-width="0.5" opacity="0.42"/><path d="M21.6 0.0 L25.2 6.0 L27.9 11.9 L30.2 17.9 L32.5 23.9 L35.1 29.8 L37.1 35.8 L38.0 41.8 L37.6 47.7 L37.0 53.7 L37.0 59.6 L37.7 65.6 L38.9 71.6 L39.8 77.5 L40.2 83.5 L40.7 89.5 L41.7 95.4 L43.1 101.4 L43.8 107.4 L43.3 113.3 L42.3 119.3 L41.6 125.2 L42.0 131.2 L43.2 137.2 L44.2 143.1 L44.6 149.1 L44.4 155.1 L44.4 161.0 L44.8 167.0" stroke="#d8d8d8" stroke-width="1.2" opacity="0.87"/><path d="M28.5 8.6 L30.0 12.5 L31.4 16.3 L32.9 20.1 L34.4 24.0 L36.1 27.8 L37.6 31.6 L38.8 35.5 L39.4 39.3 L39.4 43.2 L39.1 47.0 L38.7 50.8 L38.5 54.7 L38.7 58.5 L39.0 62.3 L39.7 66.2 L40.5 70.0 L41.1 73.8 L41.5 77.7 L41.8 81.5 L42.0 85.3 L42.5 89.2 L43.1 93.0 L44.0 96.8 L44.8 100.7 L45.4 104.5 L45.5 108.3 L45.1 112.2 L44.4 116.0" stroke="#8d8d8d" stroke-width="1.0" opacity="0.61"/><path d="M30.7 8.4 L31.6 10.8 L32.5 13.2 L33.4 15.6 L34.3 18.1 L35.2 20.5 L36.3 22.9 L37.3 25.4 L38.4 27.8 L39.3 30.2 L40.1 32.6 L40.7 35.1 L41.1 37.5 L41.3 39.9 L41.2 42.4 L41.1 44.8 L40.8 47.2 L40.6 49.6 L40.4 52.1 L40.4 54.5 L40.6 56.9 L40.8 59.4 L41.2 61.8 L41.6 64.2 L42.1 66.6 L42.5 69.1 L42.9 71.5 L43.3 73.9 L43.5 76.4" stroke="#797979" stroke-width="0.8" opacity="0.47"/><path d="M28.2 0.0 L31.3 6.0 L33.6 11.9 L35.8 17.9 L38.3 23.9 L40.7 29.8 L42.3 35.8 L42.5 41.8 L42.0 47.7 L41.8 53.7 L42.4 59.6 L43.4 65.6 L44.5 71.6 L45.1 77.5 L45.4 83.5 L46.3 89.5 L47.6 95.4 L48.8 101.4 L48.9 107.4 L48.0 113.3 L47.0 119.3 L46.8 125.2 L47.7 131.2 L48.9 137.2 L49.6 143.1 L49.6 149.1 L49.5 155.1 L49.7 161.0 L50.2 167.0" stroke="#e0e0e0" stroke-width="0.6" opacity="0.65"/><path d="M30.8 0.0 L33.6 6.0 L35.8 11.9 L38.0 17.9 L40.6 23.9 L42.9 29.8 L44.2 35.8 L44.2 41.8 L43.7 47.7 L43.7 53.7 L44.5 59.6 L45.6 65.6 L46.6 71.6 L47.1 77.5 L47.5 83.5 L48.5 89.5 L49.9 95.4 L50.9 101.4 L50.8 107.4 L49.8 113.3 L48.9 119.3 L48.9 125.2 L49.9 131.2 L51.0 137.2 L51.6 143.1 L51.5 149.1 L51.4 155.1 L51.8 161.0 L52.2 167.0" stroke="#808080" stroke-width="1.0" opacity="0.79"/><path d="M33.5 0.0 L36.1 6.0 L38.2 11.9 L40.5 17.9 L43.1 23.9 L45.3 29.8 L46.3 35.8 L46.1 41.8 L45.6 47.7 L45.9 53.7 L46.9 59.6 L48.1 65.6 L48.9 71.6 L49.3 77.5 L49.8 83.5 L51.0 89.5 L52.4 95.4 L53.2 101.4 L52.9 107.4 L51.8 113.3 L51.0 119.3 L51.3 125.2 L52.4 131.2 L53.4 137.2 L53.7 143.1 L53.6 149.1 L53.7 155.1 L54.1 161.0 L54.4 167.0" stroke="#969696" stroke-width="0.9" opacity="0.53"/><path d="M50.6 71.8 L50.8 74.6 L51.0 77.4 L51.2 80.2 L51.5 82.9 L52.0 85.7 L52.6 88.5 L53.2 91.2 L53.9 94.0 L54.5 96.8 L54.8 99.6 L54.9 102.3 L54.7 105.1 L54.3 107.9 L53.8 110.6 L53.2 113.4 L52.8 116.2 L52.6 118.9 L52.7 121.7 L52.9 124.5 L53.4 127.3 L53.9 130.0 L54.5 132.8 L54.9 135.6 L55.2 138.3 L55.3 141.1 L55.3 143.9 L55.3 146.6 L55.2 149.4" stroke="#7e7e7e" stroke-width="1.1" opacity="0.32"/><path d="M38.2 0.0 L40.4 6.0 L42.5 11.9 L44.9 17.9 L47.4 23.9 L49.2 29.8 L49.8 35.8 L49.4 41.8 L49.1 47.7 L49.8 53.7 L51.2 59.6 L52.2 65.6 L52.8 71.6 L53.2 77.5 L54.0 83.5 L55.3 89.5 L56.6 95.4 L57.1 101.4 L56.4 107.4 L55.2 113.3 L54.8 119.3 L55.5 125.2 L56.6 131.2 L57.4 137.2 L57.5 143.1 L57.3 149.1 L57.6 155.1 L58.1 161.0 L58.1 167.0" stroke="#a2a2a2" stroke-width="1.2" opacity="0.72"/><path d="M44.8 13.8 L46.6 18.0 L48.4 22.2 L49.9 26.5 L50.8 30.7 L51.0 34.9 L50.8 39.1 L50.4 43.4 L50.4 47.6 L50.9 51.8 L51.8 56.0 L52.8 60.2 L53.5 64.5 L54.0 68.7 L54.3 72.9 L54.6 77.1 L55.1 81.4 L55.9 85.6 L57.0 89.8 L57.9 94.0 L58.4 98.2 L58.3 102.5 L57.7 106.7 L56.9 110.9 L56.3 115.1 L56.2 119.3 L56.7 123.6 L57.5 127.8 L58.2 132.0" stroke="#a3a3a3" stroke-width="0.9" opacity="0.60"/><path d="M52.3 46.8 L52.6 49.8 L53.2 52.8 L53.9 55.7 L54.7 58.7 L55.2 61.7 L55.7 64.6 L56.0 67.6 L56.2 70.6 L56.4 73.5 L56.6 76.5 L56.9 79.5 L57.5 82.4 L58.1 85.4 L58.9 88.4 L59.6 91.3 L60.2 94.3 L60.5 97.3 L60.4 100.2 L60.1 103.2 L59.6 106.2 L59.0 109.1 L58.5 112.1 L58.2 115.1 L58.2 118.0 L58.5 121.0 L59.0 124.0 L59.5 126.9 L60.1 129.9" stroke="#b1b1b1" stroke-width="1.2" opacity="0.43"/><path d="M46.0 2.0 L47.9 7.7 L50.1 13.4 L52.5 19.1 L54.4 24.8 L55.2 30.6 L55.0 36.3 L54.7 42.0 L55.0 47.7 L56.2 53.4 L57.7 59.1 L58.5 64.8 L58.9 70.6 L59.3 76.3 L60.3 82.0 L61.8 87.7 L62.9 93.4 L63.1 99.1 L62.2 104.9 L61.2 110.6 L60.9 116.3 L61.5 122.0 L62.6 127.7 L63.3 133.4 L63.4 139.2 L63.2 144.9 L63.5 150.6 L64.0 156.3 L64.3 162.0" stroke="#d7d7d7" stroke-width="1.1" opacity="0.38"/><path d="M47.2 0.0 L49.1 6.0 L51.3 11.9 L53.9 17.9 L55.9 23.9 L56.7 29.8 L56.4 35.8 L56.1 41.8 L56.6 47.7 L58.0 53.7 L59.5 59.6 L60.2 65.6 L60.5 71.6 L61.2 77.5 L62.5 83.5 L64.0 89.5 L64.7 95.4 L64.3 101.4 L63.2 107.4 L62.5 113.3 L62.8 119.3 L63.9 125.2 L64.7 131.2 L64.9 137.2 L64.8 143.1 L65.0 149.1 L65.5 155.1 L65.8 161.0 L65.0 167.0" stroke="#8e8e8e" stroke-width="1.0" opacity="0.73"/><path d="M49.5 0.0 L51.4 6.0 L53.7 11.9 L56.2 17.9 L58.0 23.9 L58.6 29.8 L58.2 35.8 L58.0 41.8 L58.7 47.7 L60.3 53.7 L61.6 59.6 L62.2 65.6 L62.6 71.6 L63.4 77.5 L64.8 83.5 L66.2 89.5 L66.8 95.4 L66.1 101.4 L65.0 107.4 L64.5 113.3 L65.0 119.3 L66.1 125.2 L66.8 131.2 L66.9 137.2 L66.7 143.1 L67.1 149.1 L67.7 155.1 L67.8 161.0 L66.7 167.0" stroke="#adadad" stroke-width="1.0" opacity="0.56"/><path d="M52.1 0.0 L54.0 6.0 L56.4 11.9 L58.8 17.9 L60.3 23.9 L60.6 29.8 L60.1 35.8 L60.1 41.8 L61.0 47.7 L62.6 53.7 L63.9 59.6 L64.4 65.6 L64.8 71.6 L65.8 77.5 L67.3 83.5 L68.6 89.5 L68.9 95.4 L68.1 101.4 L67.0 107.4 L66.7 113.3 L67.4 119.3 L68.4 125.2 L69.0 131.2 L68.9 137.2 L68.9 143.1 L69.3 149.1 L69.9 155.1 L69.9 161.0 L68.5 167.0" stroke="#bdbdbd" stroke-width="1.0" opacity="0.37"/><path d="M53.8 0.0 L55.7 6.0 L58.1 11.9 L60.5 17.9 L61.8 23.9 L61.9 29.8 L61.4 35.8 L61.5 41.8 L62.6 47.7 L64.2 53.7 L65.5 59.6 L65.9 65.6 L66.3 71.6 L67.4 77.5 L69.0 83.5 L70.2 89.5 L70.3 95.4 L69.4 101.4 L68.4 107.4 L68.2 113.3 L69.0 119.3 L70.0 125.2 L70.4 131.2 L70.3 137.2 L70.4 143.1 L70.9 149.1 L71.4 155.1 L71.2 161.0 L69.7 167.0" stroke="#999999" stroke-width="1.1" opacity="0.31"/><path d="M55.6 0.0 L57.6 6.0 L60.0 11.9 L62.2 17.9 L63.4 23.9 L63.3 29.8 L62.8 35.8 L63.1 41.8 L64.3 47.7 L65.9 53.7 L67.1 59.6 L67.4 65.6 L68.0 71.6 L69.2 77.5 L70.8 83.5 L71.9 89.5 L71.8 95.4 L70.7 101.4 L69.8 107.4 L69.8 113.3 L70.7 119.3 L71.6 125.2 L72.0 131.2 L71.8 137.2 L71.9 143.1 L72.5 149.1 L73.0 155.1 L72.6 161.0 L71.0 167.0" stroke="#e6e6e6" stroke-width="1.1" opacity="0.50"/><path d="M65.5 38.1 L65.8 41.1 L66.4 44.0 L67.2 47.0 L68.0 49.9 L68.8 52.9 L69.4 55.8 L69.8 58.8 L70.1 61.7 L70.2 64.7 L70.4 67.6 L70.8 70.6 L71.3 73.5 L72.1 76.5 L72.9 79.4 L73.7 82.4 L74.3 85.3 L74.7 88.3 L74.8 91.2 L74.5 94.2 L74.1 97.1 L73.5 100.0 L73.0 103.0 L72.6 105.9 L72.5 108.9 L72.7 111.8 L73.0 114.8 L73.5 117.7 L74.0 120.7" stroke="#cfcfcf" stroke-width="0.7" opacity="0.48"/><path d="M75.0 80.1 L75.6 82.4 L76.0 84.6 L76.3 86.8 L76.4 89.1 L76.4 91.3 L76.2 93.6 L75.8 95.8 L75.4 98.0 L75.0 100.3 L74.6 102.5 L74.3 104.7 L74.2 107.0 L74.2 109.2 L74.4 111.5 L74.7 113.7 L75.1 115.9 L75.4 118.2 L75.8 120.4 L76.0 122.6 L76.2 124.9 L76.3 127.1 L76.3 129.4 L76.3 131.6 L76.2 133.8 L76.2 136.1 L76.2 138.3 L76.3 140.5 L76.5 142.8" stroke="#a9a9a9" stroke-width="0.5" opacity="0.83"/><path d="M63.4 0.0 L65.6 6.0 L67.9 11.9 L69.4 17.9 L69.6 23.9 L69.1 29.8 L68.9 35.8 L69.8 41.8 L71.4 47.7 L72.9 53.7 L73.6 59.6 L74.0 65.6 L75.0 71.6 L76.6 77.5 L78.0 83.5 L78.4 89.5 L77.7 95.4 L76.6 101.4 L76.2 107.4 L76.8 113.3 L77.8 119.3 L78.3 125.2 L78.2 131.2 L78.1 137.2 L78.6 143.1 L79.3 149.1 L79.4 155.1 L78.2 161.0 L76.0 167.0" stroke="#d8d8d8" stroke-width="0.9" opacity="0.42"/><path d="M68.5 7.4 L69.5 10.1 L70.4 12.7 L71.0 15.4 L71.4 18.0 L71.5 20.6 L71.4 23.3 L71.2 25.9 L70.9 28.5 L70.7 31.2 L70.7 33.8 L70.9 36.5 L71.3 39.1 L71.9 41.7 L72.6 44.4 L73.3 47.0 L74.0 49.7 L74.6 52.3 L75.0 54.9 L75.4 57.6 L75.6 60.2 L75.7 62.8 L76.0 65.5 L76.4 68.1 L76.9 70.8 L77.6 73.4 L78.3 76.0 L79.1 78.7 L79.7 81.3" stroke="#999999" stroke-width="1.2" opacity="0.35"/><path d="M76.9 51.8 L77.5 55.9 L77.9 60.0 L78.2 64.1 L78.9 68.2 L79.9 72.3 L81.1 76.3 L82.1 80.4 L82.6 84.5 L82.5 88.6 L81.9 92.7 L81.2 96.8 L80.6 100.9 L80.4 105.0 L80.8 109.1 L81.4 113.2 L82.0 117.3 L82.3 121.3 L82.4 125.4 L82.3 129.5 L82.2 133.6 L82.4 137.7 L82.9 141.8 L83.4 145.9 L83.7 150.0 L83.4 154.1 L82.5 158.2 L81.1 162.2 L79.6 166.3" stroke="#9b9b9b" stroke-width="0.9" opacity="0.54"/><path d="M70.1 0.0 L72.3 6.0 L74.3 11.9 L75.0 17.9 L74.6 23.9 L74.1 29.8 L74.4 35.8 L75.7 41.8 L77.3 47.7 L78.5 53.7 L79.1 59.6 L79.7 65.6 L81.1 71.6 L82.8 77.5 L83.8 83.5 L83.5 89.5 L82.5 95.4 L81.7 101.4 L81.8 107.4 L82.7 113.3 L83.4 119.3 L83.5 125.2 L83.4 131.2 L83.6 137.2 L84.3 143.1 L84.9 149.1 L84.3 155.1 L82.5 161.0 L80.3 167.0" stroke="#999999" stroke-width="1.0" opacity="0.32"/><path d="M73.1 0.0 L75.4 6.0 L77.0 11.9 L77.4 17.9 L76.8 23.9 L76.4 29.8 L77.0 35.8 L78.4 41.8 L79.9 47.7 L80.9 53.7 L81.5 59.6 L82.3 65.6 L83.9 71.6 L85.5 77.5 L86.2 83.5 L85.7 89.5 L84.6 95.4 L84.0 101.4 L84.4 107.4 L85.3 113.3 L85.8 119.3 L85.8 125.2 L85.7 131.2 L86.1 137.2 L86.9 143.1 L87.2 149.1 L86.3 155.1 L84.4 161.0 L82.3 167.0" stroke="#c0c0c0" stroke-width="0.9" opacity="0.28"/><path d="M75.0 0.0 L77.2 6.0 L78.6 11.9 L78.8 17.9 L78.2 23.9 L77.9 29.8 L78.5 35.8 L80.0 41.8 L81.4 47.7 L82.4 53.7 L83.0 59.6 L83.9 65.6 L85.6 71.6 L87.1 77.5 L87.7 83.5 L87.0 89.5 L86.0 95.4 L85.5 101.4 L86.0 107.4 L86.8 113.3 L87.3 119.3 L87.2 125.2 L87.1 131.2 L87.6 137.2 L88.4 143.1 L88.6 149.1 L87.6 155.1 L85.5 161.0 L83.5 167.0" stroke="#9b9b9b" stroke-width="0.6" opacity="0.62"/><path d="M77.8 0.0 L79.9 6.0 L81.0 11.9 L80.9 17.9 L80.2 23.9 L80.0 29.8 L80.9 35.8 L82.4 41.8 L83.7 47.7 L84.5 53.7 L85.2 59.6 L86.3 65.6 L88.1 71.6 L89.5 77.5 L89.8 83.5 L89.0 89.5 L88.0 95.4 L87.7 101.4 L88.3 107.4 L89.1 113.3 L89.4 119.3 L89.3 125.2 L89.3 131.2 L89.9 137.2 L90.7 143.1 L90.7 149.1 L89.3 155.1 L87.2 161.0 L85.4 167.0" stroke="#dbdbdb" stroke-width="0.6" opacity="0.73"/><path d="M86.9 56.7 L87.3 59.2 L87.7 61.6 L88.2 64.0 L88.9 66.4 L89.6 68.8 L90.3 71.2 L91.0 73.7 L91.5 76.1 L91.8 78.5 L91.9 80.9 L91.7 83.3 L91.4 85.8 L91.0 88.2 L90.6 90.6 L90.2 93.0 L89.9 95.4 L89.7 97.9 L89.7 100.3 L89.9 102.7 L90.2 105.1 L90.5 107.5 L90.9 110.0 L91.1 112.4 L91.3 114.8 L91.4 117.2 L91.4 119.6 L91.3 122.0 L91.2 124.5" stroke="#828282" stroke-width="0.9" opacity="0.70"/><path d="M82.4 0.0 L84.2 6.0 L84.8 11.9 L84.3 17.9 L83.6 23.9 L83.7 29.8 L84.8 35.8 L86.3 41.8 L87.4 47.7 L88.1 53.7 L89.0 59.6 L90.4 65.6 L92.1 71.6 L93.3 77.5 L93.1 83.5 L92.1 89.5 L91.3 95.4 L91.4 101.4 L92.1 107.4 L92.8 113.3 L92.8 119.3 L92.6 125.2 L92.9 131.2 L93.7 137.2 L94.3 143.1 L93.9 149.1 L92.2 155.1 L90.0 161.0 L88.5 167.0" stroke="#7d7d7d" stroke-width="1.2" opacity="0.84"/><path d="M85.0 1.6 L86.1 5.9 L86.5 10.2 L86.3 14.5 L85.7 18.8 L85.3 23.1 L85.2 27.4 L85.8 31.7 L86.7 36.0 L87.8 40.3 L88.6 44.6 L89.2 49.0 L89.7 53.3 L90.3 57.6 L91.2 61.9 L92.4 66.2 L93.7 70.5 L94.7 74.8 L95.0 79.1 L94.7 83.4 L93.9 87.7 L93.2 92.0 L92.9 96.3 L93.0 100.6 L93.5 104.9 L94.1 109.2 L94.4 113.5 L94.4 117.8 L94.3 122.1" stroke="#898989" stroke-width="1.2" opacity="0.44"/><path d="M87.6 0.0 L88.9 6.0 L89.0 11.9 L88.2 17.9 L87.6 23.9 L88.1 29.8 L89.4 35.8 L90.6 41.8 L91.5 47.7 L92.2 53.7 L93.4 59.6 L95.1 65.6 L96.7 71.6 L97.4 77.5 L96.8 83.5 L95.8 89.5 L95.2 95.4 L95.7 101.4 L96.4 107.4 L96.8 113.3 L96.7 119.3 L96.6 125.2 L97.1 131.2 L98.0 137.2 L98.3 143.1 L97.3 149.1 L95.3 155.1 L93.4 161.0 L92.3 167.0" stroke="#9d9d9d" stroke-width="0.9" opacity="0.75"/><path d="M90.5 0.0 L91.5 6.0 L91.2 11.9 L90.3 17.9 L89.9 23.9 L90.5 29.8 L91.8 35.8 L93.0 41.8 L93.7 47.7 L94.5 53.7 L95.8 59.6 L97.6 65.6 L99.2 71.6 L99.6 77.5 L98.8 83.5 L97.8 89.5 L97.5 95.4 L98.0 101.4 L98.7 107.4 L99.0 113.3 L98.8 119.3 L98.8 125.2 L99.5 131.2 L100.3 137.2 L100.4 143.1 L99.2 149.1 L97.1 155.1 L95.3 161.0 L94.4 167.0" stroke="#c5c5c5" stroke-width="1.0" opacity="0.32"/><path d="M92.4 29.3 L92.9 31.6 L93.4 33.8 L93.9 36.1 L94.3 38.4 L94.7 40.7 L95.0 43.0 L95.3 45.3 L95.5 47.6 L95.8 49.9 L96.1 52.2 L96.5 54.5 L97.1 56.8 L97.7 59.0 L98.4 61.3 L99.1 63.6 L99.8 65.9 L100.4 68.2 L100.9 70.5 L101.2 72.8 L101.3 75.1 L101.3 77.4 L101.0 79.7 L100.7 81.9 L100.3 84.2 L99.9 86.5 L99.5 88.8 L99.3 91.1 L99.2 93.4" stroke="#939393" stroke-width="0.6" opacity="0.53"/><path d="M97.9 51.7 L98.5 54.8 L99.3 57.8 L100.2 60.8 L101.2 63.9 L102.1 66.9 L102.7 69.9 L103.1 73.0 L103.0 76.0 L102.7 79.0 L102.2 82.0 L101.7 85.1 L101.2 88.1 L101.0 91.1 L101.0 94.2 L101.3 97.2 L101.7 100.2 L102.0 103.3 L102.3 106.3 L102.4 109.3 L102.4 112.3 L102.3 115.4 L102.2 118.4 L102.1 121.4 L102.3 124.5 L102.7 127.5 L103.1 130.5 L103.6 133.6 L103.9 136.6" stroke="#e5e5e5" stroke-width="1.2" opacity="0.68"/><path d="M97.6 0.0 L97.7 6.0 L96.8 11.9 L96.0 17.9 L96.0 23.9 L97.0 29.8 L98.1 35.8 L98.9 41.8 L99.5 47.7 L100.6 53.7 L102.4 59.6 L104.2 65.6 L105.2 71.6 L104.9 77.5 L103.9 83.5 L103.2 89.5 L103.4 95.4 L104.1 101.4 L104.5 107.4 L104.4 113.3 L104.2 119.3 L104.6 125.2 L105.5 131.2 L106.1 137.2 L105.5 143.1 L103.7 149.1 L101.7 155.1 L100.4 161.0 L100.0 167.0" stroke="#949494" stroke-width="1.0" opacity="0.85"/><path d="M106.5 74.0 L106.2 77.3 L105.6 80.6 L105.1 83.9 L104.7 87.2 L104.5 90.5 L104.7 93.8 L105.0 97.1 L105.4 100.4 L105.7 103.7 L105.9 106.9 L105.8 110.2 L105.7 113.5 L105.6 116.8 L105.6 120.1 L105.8 123.4 L106.3 126.7 L106.8 130.0 L107.3 133.3 L107.5 136.6 L107.3 139.9 L106.7 143.2 L105.7 146.5 L104.6 149.7 L103.4 153.0 L102.5 156.3 L101.8 159.6 L101.5 162.9 L101.4 166.2" stroke="#c9c9c9" stroke-width="0.6" opacity="0.50"/><path d="M101.6 0.0 L101.2 6.0 L100.1 11.9 L99.4 17.9 L99.7 23.9 L100.7 29.8 L101.7 35.8 L102.3 41.8 L102.9 47.7 L104.3 53.7 L106.2 59.6 L107.9 65.6 L108.5 71.6 L107.9 77.5 L106.9 83.5 L106.5 89.5 L106.9 95.4 L107.5 101.4 L107.8 107.4 L107.5 113.3 L107.5 119.3 L108.1 125.2 L109.1 131.2 L109.3 137.2 L108.3 143.1 L106.3 149.1 L104.4 155.1 L103.4 161.0 L103.3 167.0" stroke="#e2e2e2" stroke-width="1.1" opacity="0.57"/><path d="M101.6 17.6 L101.8 21.7 L102.4 25.8 L103.1 29.9 L103.7 34.0 L104.1 38.1 L104.5 42.2 L104.9 46.3 L105.7 50.3 L106.9 54.4 L108.3 58.5 L109.6 62.6 L110.4 66.7 L110.6 70.8 L110.2 74.9 L109.5 79.0 L108.9 83.1 L108.6 87.2 L108.7 91.3 L109.1 95.4 L109.6 99.5 L109.8 103.6 L109.8 107.7 L109.6 111.8 L109.5 115.9 L109.6 120.0 L110.2 124.1 L110.9 128.2 L111.4 132.3" stroke="#8c8c8c" stroke-width="0.6" opacity="0.51"/><path d="M105.4 26.4 L105.9 29.5 L106.3 32.7 L106.6 35.9 L106.8 39.0 L107.1 42.2 L107.5 45.4 L108.1 48.6 L109.0 51.7 L110.0 54.9 L111.1 58.1 L112.1 61.2 L112.7 64.4 L113.1 67.6 L113.0 70.8 L112.6 73.9 L112.1 77.1 L111.6 80.3 L111.2 83.4 L111.1 86.6 L111.2 89.8 L111.5 93.0 L111.9 96.1 L112.2 99.3 L112.3 102.5 L112.2 105.6 L112.1 108.8 L111.9 112.0 L111.9 115.2" stroke="#e1e1e1" stroke-width="0.6" opacity="0.86"/><path d="M112.7 79.8 L112.5 81.6 L112.3 83.4 L112.3 85.3 L112.3 87.1 L112.4 88.9 L112.5 90.8 L112.7 92.6 L112.9 94.4 L113.1 96.3 L113.3 98.1 L113.4 99.9 L113.4 101.8 L113.4 103.6 L113.4 105.5 L113.3 107.3 L113.2 109.1 L113.1 111.0 L113.0 112.8 L113.0 114.6 L113.1 116.5 L113.3 118.3 L113.5 120.1 L113.8 122.0 L114.1 123.8 L114.4 125.6 L114.7 127.5 L114.9 129.3 L115.1 131.2" stroke="#9d9d9d" stroke-width="0.8" opacity="0.36"/><path d="M110.3 0.0 L109.1 6.0 L108.0 11.9 L107.8 17.9 L108.5 23.9 L109.3 29.8 L109.7 35.8 L110.2 41.8 L111.2 47.7 L113.1 53.7 L115.0 59.6 L116.0 65.6 L115.7 71.6 L114.7 77.5 L114.1 83.5 L114.4 89.5 L115.0 95.4 L115.2 101.4 L115.0 107.4 L114.8 113.3 L115.3 119.3 L116.3 125.2 L116.9 131.2 L116.2 137.2 L114.4 143.1 L112.4 149.1 L111.2 155.1 L110.9 161.0 L110.8 167.0" stroke="#c1c1c1" stroke-width="0.8" opacity="0.26"/><path d="M112.4 0.0 L111.0 6.0 L110.0 11.9 L110.0 17.9 L110.7 23.9 L111.4 29.8 L111.7 35.8 L112.2 41.8 L113.4 47.7 L115.3 53.7 L117.2 59.6 L117.9 65.6 L117.4 71.6 L116.5 77.5 L116.0 83.5 L116.4 89.5 L116.9 95.4 L117.1 101.4 L116.8 107.4 L116.7 113.3 L117.3 119.3 L118.3 125.2 L118.8 131.2 L117.9 137.2 L115.9 143.1 L114.0 149.1 L113.0 155.1 L112.8 161.0 L112.6 167.0" stroke="#c8c8c8" stroke-width="0.8" opacity="0.65"/><path d="M114.4 0.0 L113.0 6.0 L112.0 11.9 L112.1 17.9 L112.8 23.9 L113.4 29.8 L113.6 35.8 L114.2 41.8 L115.5 47.7 L117.5 53.7 L119.3 59.6 L119.8 65.6 L119.1 71.6 L118.2 77.5 L117.9 83.5 L118.3 89.5 L118.9 95.4 L118.9 101.4 L118.5 107.4 L118.6 113.3 L119.3 119.3 L120.3 125.2 L120.5 131.2 L119.4 137.2 L117.4 143.1 L115.6 149.1 L114.8 155.1 L114.6 161.0 L114.4 167.0" stroke="#909090" stroke-width="1.0" opacity="0.53"/><path d="M121.3 70.2 L120.9 72.6 L120.6 75.0 L120.3 77.5 L120.1 79.9 L120.1 82.4 L120.2 84.8 L120.5 87.3 L120.7 89.7 L120.9 92.1 L121.1 94.6 L121.1 97.0 L121.1 99.5 L120.9 101.9 L120.8 104.4 L120.6 106.8 L120.6 109.2 L120.7 111.7 L120.9 114.1 L121.2 116.6 L121.7 119.0 L122.1 121.5 L122.5 123.9 L122.7 126.3 L122.8 128.8 L122.6 131.2 L122.1 133.7 L121.5 136.1 L120.7 138.6" stroke="#a8a8a8" stroke-width="0.7" opacity="0.73"/><path d="M118.2 29.2 L118.3 34.0 L118.6 38.7 L119.5 43.5 L121.0 48.2 L122.6 53.0 L123.8 57.7 L124.2 62.4 L123.9 67.2 L123.1 71.9 L122.5 76.7 L122.4 81.4 L122.8 86.1 L123.2 90.9 L123.4 95.6 L123.2 100.4 L122.9 105.1 L122.9 109.8 L123.4 114.6 L124.2 119.3 L124.9 124.1 L124.9 128.8 L124.1 133.6 L122.7 138.3 L121.1 143.0 L119.9 147.8 L119.3 152.5 L119.1 157.3 L119.0 162.0" stroke="#cdcdcd" stroke-width="1.0" opacity="0.68"/><path d="M119.8 14.1 L120.1 18.1 L120.4 22.1 L120.5 26.1 L120.6 30.1 L120.6 34.1 L121.0 38.1 L121.7 42.1 L122.9 46.1 L124.3 50.1 L125.5 54.1 L126.3 58.1 L126.4 62.1 L126.0 66.1 L125.4 70.1 L124.9 74.1 L124.6 78.1 L124.8 82.1 L125.1 86.1 L125.4 90.1 L125.6 94.1 L125.4 98.1 L125.1 102.1 L125.0 106.1 L125.1 110.1 L125.7 114.1 L126.4 118.1 L127.0 122.1 L127.2 126.1" stroke="#808080" stroke-width="1.0" opacity="0.78"/><path d="M127.7 62.7 L127.2 66.3 L126.7 69.9 L126.2 73.5 L126.0 77.0 L126.0 80.6 L126.3 84.2 L126.7 87.8 L126.8 91.4 L126.8 95.0 L126.6 98.6 L126.4 102.1 L126.3 105.7 L126.4 109.3 L126.9 112.9 L127.5 116.5 L128.1 120.1 L128.5 123.7 L128.4 127.2 L127.8 130.8 L126.8 134.4 L125.6 138.0 L124.4 141.6 L123.5 145.2 L123.0 148.7 L122.7 152.3 L122.6 155.9 L122.5 159.5 L122.3 163.1" stroke="#aeaeae" stroke-width="0.8" opacity="0.34"/><path d="M124.7 0.0 L123.5 6.0 L123.3 11.9 L123.7 17.9 L123.9 23.9 L123.9 29.8 L124.2 35.8 L125.4 41.8 L127.4 47.7 L129.1 53.7 L129.7 59.6 L129.1 65.6 L128.2 71.6 L128.0 77.5 L128.3 83.5 L128.8 89.5 L128.7 95.4 L128.3 101.4 L128.3 107.4 L129.1 113.3 L130.1 119.3 L130.4 125.2 L129.4 131.2 L127.4 137.2 L125.7 143.1 L124.8 149.1 L124.6 155.1 L124.3 161.0 L123.6 167.0" stroke="#9f9f9f" stroke-width="0.6" opacity="0.26"/><path d="M126.3 0.0 L125.2 6.0 L125.2 11.9 L125.5 17.9 L125.7 23.9 L125.7 29.8 L126.1 35.8 L127.5 41.8 L129.5 47.7 L131.1 53.7 L131.5 59.6 L130.8 65.6 L130.0 71.6 L129.8 77.5 L130.3 83.5 L130.6 89.5 L130.4 95.4 L130.0 101.4 L130.1 107.4 L131.1 113.3 L132.1 119.3 L132.1 125.2 L130.9 131.2 L128.9 137.2 L127.3 143.1 L126.6 149.1 L126.4 155.1 L126.0 161.0 L125.3 167.0" stroke="#929292" stroke-width="0.9" opacity="0.38"/><path d="M132.2 81.7 L132.3 83.8 L132.5 85.9 L132.5 88.0 L132.5 90.2 L132.4 92.3 L132.3 94.4 L132.1 96.5 L132.0 98.7 L131.9 100.8 L131.9 102.9 L131.9 105.1 L132.1 107.2 L132.4 109.3 L132.8 111.4 L133.2 113.6 L133.6 115.7 L133.9 117.8 L134.1 120.0 L134.2 122.1 L134.0 124.2 L133.7 126.3 L133.2 128.5 L132.6 130.6 L132.0 132.7 L131.2 134.8 L130.6 137.0 L129.9 139.1 L129.4 141.2" stroke="#9c9c9c" stroke-width="0.8" opacity="0.84"/><path d="M130.2 0.0 L129.6 6.0 L129.8 11.9 L130.1 17.9 L130.0 23.9 L130.1 29.8 L130.9 35.8 L132.7 41.8 L134.7 47.7 L135.8 53.7 L135.7 59.6 L134.8 65.6 L134.3 71.6 L134.4 77.5 L134.9 83.5 L135.0 89.5 L134.5 95.4 L134.3 101.4 L134.8 107.4 L135.9 113.3 L136.6 119.3 L136.1 125.2 L134.5 131.2 L132.6 137.2 L131.4 143.1 L130.9 149.1 L130.6 155.1 L130.0 161.0 L129.4 167.0" stroke="#bdbdbd" stroke-width="0.7" opacity="0.88"/><path d="M136.3 66.0 L136.0 68.8 L135.9 71.6 L136.0 74.5 L136.1 77.3 L136.4 80.1 L136.6 82.9 L136.6 85.8 L136.6 88.6 L136.4 91.4 L136.2 94.2 L136.0 97.1 L135.9 99.9 L136.0 102.7 L136.3 105.5 L136.7 108.4 L137.3 111.2 L137.8 114.0 L138.1 116.8 L138.2 119.7 L138.0 122.5 L137.5 125.3 L136.8 128.1 L135.9 131.0 L134.9 133.8 L134.1 136.6 L133.4 139.4 L133.0 142.3 L132.7 145.1" stroke="#ebebeb" stroke-width="0.9" opacity="0.29"/><path d="M133.1 0.0 L132.8 6.0 L133.1 11.9 L133.3 17.9 L133.2 23.9 L133.4 29.8 L134.5 35.8 L136.5 41.8 L138.4 47.7 L139.1 53.7 L138.6 59.6 L137.8 65.6 L137.5 71.6 L137.8 77.5 L138.2 83.5 L138.0 89.5 L137.5 95.4 L137.5 101.4 L138.2 107.4 L139.4 113.3 L139.8 119.3 L138.9 125.2 L137.0 131.2 L135.3 137.2 L134.4 143.1 L134.1 149.1 L133.7 155.1 L133.0 161.0 L132.4 167.0" stroke="#898989" stroke-width="1.0" opacity="0.32"/><path d="M134.7 0.0 L134.6 6.0 L134.9 11.9 L135.0 17.9 L134.8 23.9 L135.2 29.8 L136.5 35.8 L138.6 41.8 L140.3 47.7 L140.8 53.7 L140.2 59.6 L139.4 65.6 L139.2 71.6 L139.6 77.5 L139.9 83.5 L139.7 89.5 L139.2 95.4 L139.2 101.4 L140.1 107.4 L141.2 113.3 L141.4 119.3 L140.3 125.2 L138.4 131.2 L136.8 137.2 L136.1 143.1 L135.8 149.1 L135.3 155.1 L134.5 161.0 L134.1 167.0" stroke="#989898" stroke-width="0.6" opacity="0.79"/><path d="M137.4 6.8 L137.7 11.7 L137.7 16.6 L137.5 21.5 L137.7 26.5 L138.4 31.4 L139.9 36.3 L141.6 41.2 L143.0 46.1 L143.5 51.0 L143.2 56.0 L142.5 60.9 L142.0 65.8 L142.0 70.7 L142.4 75.6 L142.6 80.5 L142.5 85.5 L142.1 90.4 L141.8 95.3 L141.9 100.2 L142.7 105.1 L143.6 110.0 L144.2 115.0 L143.9 119.9 L142.7 124.8 L141.1 129.7 L139.8 134.6 L139.0 139.6 L138.6 144.5" stroke="#d4d4d4" stroke-width="0.8" opacity="0.86"/><path d="M139.3 22.1 L139.5 25.7 L140.0 29.3 L140.9 33.0 L142.2 36.6 L143.5 40.2 L144.5 43.9 L145.2 47.5 L145.3 51.1 L145.0 54.8 L144.6 58.4 L144.1 62.0 L143.8 65.7 L143.9 69.3 L144.1 72.9 L144.3 76.6 L144.5 80.2 L144.4 83.8 L144.1 87.5 L143.7 91.1 L143.6 94.7 L143.7 98.4 L144.1 102.0 L144.8 105.6 L145.5 109.3 L145.9 112.9 L145.9 116.6 L145.4 120.2 L144.5 123.8" stroke="#adadad" stroke-width="1.2" opacity="0.67"/><path d="M141.2 0.0 L141.4 6.0 L141.6 11.9 L141.4 17.9 L141.4 23.9 L142.4 29.8 L144.3 35.8 L146.3 41.8 L147.3 47.7 L147.1 53.7 L146.3 59.6 L145.9 65.6 L146.1 71.6 L146.5 77.5 L146.4 83.5 L145.8 89.5 L145.6 95.4 L146.2 101.4 L147.4 107.4 L148.0 113.3 L147.4 119.3 L145.7 125.2 L144.0 131.2 L142.9 137.2 L142.5 143.1 L142.1 149.1 L141.3 155.1 L140.7 161.0 L140.8 167.0" stroke="#919191" stroke-width="1.1" opacity="0.68"/><path d="M142.4 0.0 L142.7 6.0 L142.7 11.9 L142.6 17.9 L142.7 23.9 L143.8 29.8 L145.8 35.8 L147.7 41.8 L148.6 47.7 L148.2 53.7 L147.4 59.6 L147.1 65.6 L147.4 71.6 L147.7 77.5 L147.5 83.5 L146.9 89.5 L146.8 95.4 L147.5 101.4 L148.7 107.4 L149.2 113.3 L148.4 119.3 L146.7 125.2 L145.0 131.2 L144.0 137.2 L143.7 143.1 L143.2 149.1 L142.4 155.1 L141.8 161.0 L142.1 167.0" stroke="#cccccc" stroke-width="1.1" opacity="0.36"/><path d="M145.0 5.1 L145.0 9.5 L144.9 14.0 L144.8 18.4 L144.9 22.9 L145.7 27.3 L147.0 31.7 L148.6 36.2 L150.0 40.6 L150.7 45.0 L150.8 49.5 L150.3 53.9 L149.7 58.3 L149.4 62.8 L149.5 67.2 L149.8 71.6 L150.0 76.1 L149.9 80.5 L149.5 84.9 L149.1 89.4 L149.0 93.8 L149.5 98.2 L150.3 102.7 L151.1 107.1 L151.5 111.6 L151.1 116.0 L150.0 120.4 L148.7 124.9 L147.4 129.3" stroke="#8a8a8a" stroke-width="0.7" opacity="0.85"/><path d="M147.2 0.0 L147.4 6.0 L147.3 11.9 L147.1 17.9 L147.6 23.9 L149.2 29.8 L151.3 35.8 L152.8 41.8 L153.1 47.7 L152.5 53.7 L151.9 59.6 L151.9 65.6 L152.3 71.6 L152.3 77.5 L151.8 83.5 L151.3 89.5 L151.6 95.4 L152.6 101.4 L153.6 107.4 L153.6 113.3 L152.3 119.3 L150.5 125.2 L149.2 131.2 L148.5 137.2 L148.2 143.1 L147.5 149.1 L146.6 155.1 L146.3 161.0 L147.2 167.0" stroke="#a9a9a9" stroke-width="1.0" opacity="0.62"/><path d="M117.3 0.0 L115.6 6.0 L114.5 11.9 L114.4 17.9 L114.8 23.9 L115.1 29.8 L115.2 35.8 L115.6 41.8 L116.9 47.7 L118.9 53.7 L120.4 59.6 L120.8 65.6 L120.1 71.6 L119.2 77.5 L119.0 83.5 L119.5 89.5 L120.0 95.4 L119.9 101.4 L119.6 107.4 L119.7 113.3 L120.5 119.3 L121.5 125.2 L121.5 131.2 L120.3 137.2 L118.3 143.1 L116.6 149.1 L115.8 155.1 L115.7 161.0 L115.4 167.0" stroke="#bababa" stroke-width="0.8" opacity="0.76"/><path d="M117.0 13.1 L117.2 18.0 L117.5 22.8 L117.8 27.6 L117.8 32.5 L117.9 37.3 L118.5 42.1 L119.8 46.9 L121.4 51.8 L122.8 56.6 L123.5 61.4 L123.3 66.3 L122.6 71.1 L121.9 75.9 L121.7 80.7 L121.9 85.6 L122.4 90.4 L122.6 95.2 L122.5 100.1 L122.2 104.9 L122.2 109.7 L122.6 114.5 L123.4 119.4 L124.2 124.2 L124.2 129.0 L123.4 133.9 L121.9 138.7 L120.3 143.5 L119.1 148.3" stroke="#f5f5f5" stroke-width="1.3" opacity="0.64"/><path d="M120.9 42.3 L122.0 46.3 L123.3 50.2 L124.5 54.2 L125.3 58.1 L125.6 62.1 L125.3 66.0 L124.7 69.9 L124.1 73.9 L123.8 77.8 L123.8 81.8 L124.1 85.7 L124.5 89.7 L124.7 93.6 L124.6 97.6 L124.4 101.5 L124.2 105.5 L124.2 109.4 L124.6 113.3 L125.3 117.3 L126.0 121.2 L126.3 125.2 L126.2 129.1 L125.4 133.1 L124.2 137.0 L122.8 141.0 L121.7 144.9 L120.9 148.9 L120.6 152.8" stroke="#e2e2e2" stroke-width="1.1" opacity="0.66"/><path d="M122.5 0.0 L121.1 6.0 L120.6 11.9 L120.9 17.9 L121.3 23.9 L121.3 29.8 L121.5 35.8 L122.4 41.8 L124.2 47.7 L126.1 53.7 L127.1 59.6 L126.7 65.6 L125.8 71.6 L125.3 77.5 L125.5 83.5 L126.1 89.5 L126.2 95.4 L125.8 101.4 L125.6 107.4 L126.2 113.3 L127.3 119.3 L127.8 125.2 L127.1 131.2 L125.3 137.2 L123.4 143.1 L122.3 149.1 L122.0 155.1 L121.8 161.0 L121.2 167.0" stroke="#bababa" stroke-width="1.2" opacity="0.45"/><path d="M125.3 0.0 L124.2 6.0 L124.1 11.9 L124.4 17.9 L124.6 23.9 L124.6 29.8 L125.0 35.8 L126.3 41.8 L128.3 47.7 L129.9 53.7 L130.4 59.6 L129.8 65.6 L128.9 71.6 L128.7 77.5 L129.1 83.5 L129.5 89.5 L129.4 95.4 L129.0 101.4 L129.0 107.4 L129.9 113.3 L130.9 119.3 L131.1 125.2 L130.0 131.2 L128.0 137.2 L126.4 143.1 L125.5 149.1 L125.3 155.1 L125.0 161.0 L124.3 167.0" stroke="#eaeaea" stroke-width="1.1" opacity="0.82"/><path d="M126.7 0.0 L125.7 6.0 L125.7 11.9 L126.1 17.9 L126.2 23.9 L126.2 29.8 L126.7 35.8 L128.1 41.8 L130.1 47.7 L131.7 53.7 L132.0 59.6 L131.2 65.6 L130.5 71.6 L130.4 77.5 L130.8 83.5 L131.1 89.5 L130.9 95.4 L130.5 101.4 L130.7 107.4 L131.6 113.3 L132.6 119.3 L132.6 125.2 L131.3 131.2 L129.3 137.2 L127.8 143.1 L127.1 149.1 L126.9 155.1 L126.5 161.0 L125.8 167.0" stroke="#b0b0b0" stroke-width="0.7" opacity="0.54"/><path d="M134.7 56.6 L134.6 59.2 L134.3 61.8 L133.9 64.4 L133.5 67.0 L133.2 69.6 L133.0 72.2 L133.0 74.8 L133.2 77.4 L133.4 80.0 L133.6 82.6 L133.7 85.2 L133.8 87.8 L133.8 90.4 L133.6 93.0 L133.4 95.7 L133.2 98.3 L133.1 100.9 L133.1 103.5 L133.3 106.1 L133.7 108.7 L134.2 111.3 L134.7 113.9 L135.1 116.5 L135.4 119.1 L135.4 121.7 L135.2 124.3 L134.7 126.9 L134.0 129.5" stroke="#cacaca" stroke-width="1.1" opacity="0.35"/><path d="M131.2 30.9 L131.9 35.4 L133.2 39.9 L134.8 44.4 L136.1 48.9 L136.8 53.4 L136.8 57.9 L136.2 62.4 L135.6 66.9 L135.3 71.4 L135.4 76.0 L135.7 80.5 L136.0 85.0 L135.9 89.5 L135.6 94.0 L135.3 98.5 L135.3 103.0 L135.9 107.5 L136.7 112.0 L137.4 116.5 L137.6 121.0 L136.9 125.6 L135.6 130.1 L134.2 134.6 L133.0 139.1 L132.2 143.6 L131.9 148.1 L131.8 152.6 L131.4 157.1" stroke="#dadada" stroke-width="0.8" opacity="0.61"/><path d="M133.8 0.0 L133.6 6.0 L133.9 11.9 L134.0 17.9 L133.9 23.9 L134.1 29.8 L135.4 35.8 L137.4 41.8 L139.2 47.7 L139.8 53.7 L139.3 59.6 L138.5 65.6 L138.2 71.6 L138.6 77.5 L138.9 83.5 L138.7 89.5 L138.2 95.4 L138.2 101.4 L139.1 107.4 L140.2 113.3 L140.5 119.3 L139.5 125.2 L137.6 131.2 L136.0 137.2 L135.1 143.1 L134.8 149.1 L134.4 155.1 L133.6 161.0 L133.2 167.0" stroke="#cacaca" stroke-width="0.6" opacity="0.63"/><path d="M135.2 0.0 L135.1 6.0 L135.4 11.9 L135.5 17.9 L135.4 23.9 L135.8 29.8 L137.2 35.8 L139.2 41.8 L140.9 47.7 L141.3 53.7 L140.7 59.6 L139.9 65.6 L139.8 71.6 L140.2 77.5 L140.5 83.5 L140.2 89.5 L139.7 95.4 L139.8 101.4 L140.7 107.4 L141.8 113.3 L141.9 119.3 L140.8 125.2 L138.9 131.2 L137.3 137.2 L136.6 143.1 L136.3 149.1 L135.8 155.1 L135.0 161.0 L134.7 167.0" stroke="#b0b0b0" stroke-width="1.1" opacity="0.38"/><path d="M138.2 0.0 L138.3 6.0 L138.5 11.9 L138.4 17.9 L138.4 23.9 L139.0 29.8 L140.7 35.8 L142.8 41.8 L144.1 47.7 L144.2 53.7 L143.5 59.6 L142.9 65.6 L142.9 71.6 L143.4 77.5 L143.4 83.5 L143.0 89.5 L142.6 95.4 L143.0 101.4 L144.0 107.4 L144.9 113.3 L144.7 119.3 L143.2 125.2 L141.4 131.2 L140.1 137.2 L139.5 143.1 L139.2 149.1 L138.6 155.1 L137.8 161.0 L137.7 167.0" stroke="#f1f1f1" stroke-width="0.6" opacity="0.32"/><path d="M139.2 0.0 L139.4 6.0 L139.6 11.9 L139.5 17.9 L139.4 23.9 L140.2 29.8 L142.0 35.8 L144.0 41.8 L145.3 47.7 L145.2 53.7 L144.5 59.6 L143.9 65.6 L144.1 71.6 L144.5 77.5 L144.5 83.5 L144.0 89.5 L143.6 95.4 L144.1 101.4 L145.2 107.4 L146.0 113.3 L145.7 119.3 L144.1 125.2 L142.3 131.2 L141.1 137.2 L140.6 143.1 L140.2 149.1 L139.5 155.1 L138.8 161.0 L138.8 167.0" stroke="#b4b4b4" stroke-width="1.2" opacity="0.45"/><path d="M142.0 0.0 L142.2 6.0 L142.3 11.9 L142.1 17.9 L142.2 23.9 L143.2 29.8 L145.2 35.8 L147.2 41.8 L148.1 47.7 L147.8 53.7 L147.0 59.6 L146.6 65.6 L146.9 71.6 L147.2 77.5 L147.1 83.5 L146.5 89.5 L146.3 95.4 L147.0 101.4 L148.2 107.4 L148.8 113.3 L148.0 119.3 L146.3 125.2 L144.6 131.2 L143.6 137.2 L143.2 143.1 L142.8 149.1 L142.0 155.1 L141.3 161.0 L141.6 167.0" stroke="#dbdbdb" stroke-width="1.1" opacity="0.67"/><path d="M149.6 66.9 L149.9 70.4 L150.1 73.8 L150.1 77.2 L150.0 80.6 L149.7 84.0 L149.3 87.4 L149.1 90.8 L149.1 94.3 L149.5 97.7 L150.1 101.1 L150.8 104.5 L151.3 107.9 L151.6 111.3 L151.4 114.7 L150.8 118.2 L149.8 121.6 L148.7 125.0 L147.8 128.4 L147.0 131.8 L146.5 135.2 L146.3 138.6 L146.1 142.0 L145.8 145.5 L145.5 148.9 L145.0 152.3 L144.5 155.7 L144.2 159.1 L144.2 162.5" stroke="#adadad" stroke-width="0.9" opacity="0.67"/><path d="M151.8 61.2 L151.8 63.3 L151.9 65.4 L152.0 67.6 L152.1 69.7 L152.3 71.9 L152.3 74.0 L152.3 76.1 L152.3 78.3 L152.1 80.4 L151.9 82.5 L151.7 84.7 L151.5 86.8 L151.3 88.9 L151.3 91.1 L151.3 93.2 L151.5 95.4 L151.8 97.5 L152.2 99.6 L152.7 101.8 L153.1 103.9 L153.5 106.0 L153.7 108.2 L153.8 110.3 L153.7 112.4 L153.4 114.6 L153.0 116.7 L152.4 118.8 L151.8 121.0" stroke="#f3f3f3" stroke-width="1.3" opacity="0.31"/></g></g><g filter="url(#b2)" fill="#000"><path d="M97 0 C100 20 104 36 108 54 C112 40 114 20 113 0 Z" opacity="0.9"/><path d="M38 0 C42 16 48 28 54 38 C52 24 50 10 50 0 Z" opacity="0.7"/><path d="M66 0 C70 12 72 22 76 30 C76 18 76 8 75 0 Z" opacity="0.6"/><ellipse cx="135" cy="98" rx="3.5" ry="10" opacity="0.7"/></g><g filter="url(#gyz)"><ellipse cx="140" cy="146" rx="6" ry="17" fill="#fff" opacity="0.4"/><ellipse cx="137" cy="50" rx="5" ry="5" fill="#fff" opacity="0.45"/><ellipse cx="130" cy="22" rx="8" ry="15" fill="#ccc" opacity="0.25"/></g><g fill="none" stroke="#a0a0a0" stroke-width="0.9" opacity="0.7"><path d="M150 2 C154 10 160 18 166 24 M188 0 C188 6 190 8 192 8"/><path d="M184 4 C180 20 168 30 164 42 C160 60 162 80 160 96 C160 110 166 130 166 148 L164 164"/><path d="M6 76 C10 92 16 108 18 120 C16 126 10 128 4 128 M20 132 C24 140 26 150 26 160"/><path d="M16 56 C20 58 20 62 16 62 M22 66 C20 76 16 86 16 96" stroke-width="1.6" opacity="0.5"/></g><path d="M48.6 0 L39.1 167" stroke="#08c808" stroke-width="1.1"/></svg><svg style="left:9px;top:454px;width:196.5px;height:167px" viewBox="0 0 196.5 167"><defs>
<filter id="gxz" x="0" y="0" width="100%" height="100%" color-interpolation-filters="sRGB"><feTurbulence type="fractalNoise" baseFrequency="0.6 0.2" numOctaves="2" seed="17" result="n"/><feColorMatrix in="n" type="matrix" values="0 0 0 0 1 0 0 0 0 1 0 0 0 0 1 2.6 0 0 0 -0.65" result="a"/><feComposite in="SourceGraphic" in2="a" operator="in" result="c"/><feGaussianBlur in="c" stdDeviation="0.3"/></filter>
<filter id="b3"><feGaussianBlur stdDeviation="2.2"/></filter>
</defs><rect width="196.5" height="167" fill="#000"/><g filter="url(#b3)"><path d="M88 44 C80 60 62 80 54 100 C50 120 48 140 48 167 L150 167 C152 140 156 110 158 84 C160 64 160 54 156 50 C148 54 138 58 128 60 C120 52 110 46 100 46 Z" fill="#101010"/><rect x="88" y="11" width="27" height="28" rx="6" fill="#1a1a1a"/></g><g filter="url(#gxz)"><g fill="none" stroke-linecap="round"><path d="M47.4 62.0 L47.8 65.8 L48.4 69.5 L48.7 73.2 L48.8 77.0 L48.5 80.8 L47.8 84.5 L47.1 88.2 L46.6 92.0 L46.6 95.8 L47.1 99.5 L48.0 103.2 L49.1 107.0 L50.1 110.8 L50.9 114.5 L51.3 118.2 L51.6 122.0 L51.8 125.8 L52.1 129.5 L52.6 133.2 L53.1 137.0 L53.5 140.8 L53.6 144.5 L53.1 148.2 L52.3 152.0 L51.1 155.8 L50.0 159.5 L49.2 163.2 L48.9 167.0" stroke="#d3d3d3" stroke-width="1.0" opacity="0.70"/><path d="M49.8 62.0 L50.3 65.8 L50.8 69.5 L51.1 73.2 L51.0 77.0 L50.5 80.8 L49.8 84.5 L49.2 88.2 L48.8 92.0 L48.9 95.8 L49.6 99.5 L50.6 103.2 L51.7 107.0 L52.6 110.8 L53.3 114.5 L53.6 118.2 L53.9 122.0 L54.1 125.8 L54.5 129.5 L55.0 133.2 L55.5 137.0 L55.8 140.8 L55.7 144.5 L55.1 148.2 L54.1 152.0 L53.0 155.8 L51.9 159.5 L51.3 163.2 L51.1 167.0" stroke="#b3b3b3" stroke-width="1.0" opacity="0.40"/><path d="M52.7 63.5 L53.1 66.7 L53.5 69.8 L53.6 73.0 L53.5 76.2 L53.0 79.3 L52.5 82.5 L51.9 85.7 L51.4 88.8 L51.3 92.0 L51.6 95.2 L52.2 98.3 L53.0 101.5 L53.9 104.7 L54.8 107.8 L55.4 111.0 L55.9 114.2 L56.1 117.3 L56.3 120.5 L56.5 123.7 L56.8 126.8 L57.2 130.0 L57.7 133.2 L58.1 136.3 L58.4 139.5 L58.3 142.7 L57.9 145.8 L57.1 149.0 L56.2 152.2" stroke="#9d9d9d" stroke-width="0.9" opacity="0.30"/><path d="M57.9 109.8 L58.2 111.5 L58.4 113.2 L58.5 114.9 L58.6 116.7 L58.7 118.4 L58.8 120.1 L59.0 121.8 L59.1 123.6 L59.3 125.3 L59.5 127.0 L59.8 128.7 L60.0 130.4 L60.3 132.2 L60.6 133.9 L60.8 135.6 L60.9 137.3 L60.9 139.0 L60.9 140.8 L60.7 142.5 L60.4 144.2 L60.1 145.9 L59.6 147.7 L59.1 149.4 L58.6 151.1 L58.0 152.8 L57.5 154.5 L57.1 156.3 L56.7 158.0" stroke="#878787" stroke-width="0.6" opacity="0.35"/><path d="M55.8 83.2 L55.6 84.4 L55.4 85.6 L55.3 86.8 L55.2 88.0 L55.2 89.2 L55.2 90.4 L55.3 91.7 L55.4 92.9 L55.6 94.1 L55.8 95.3 L56.1 96.5 L56.4 97.7 L56.8 99.0 L57.1 100.2 L57.5 101.4 L57.8 102.6 L58.1 103.8 L58.4 105.0 L58.7 106.3 L59.0 107.5 L59.2 108.7 L59.4 109.9 L59.6 111.1 L59.7 112.3 L59.8 113.5 L59.9 114.8 L60.0 116.0 L60.0 117.2" stroke="#c9c9c9" stroke-width="0.6" opacity="0.30"/><path d="M58.9 62.0 L59.4 65.8 L59.6 69.5 L59.4 73.2 L58.8 77.0 L58.1 80.8 L57.5 84.5 L57.3 88.2 L57.5 92.0 L58.3 95.8 L59.3 99.5 L60.3 103.2 L61.2 107.0 L61.7 110.8 L62.0 114.5 L62.2 118.2 L62.5 122.0 L63.0 125.8 L63.6 129.5 L64.1 133.2 L64.4 137.0 L64.1 140.8 L63.4 144.5 L62.3 148.2 L61.1 152.0 L60.1 155.8 L59.6 159.5 L59.6 163.2 L59.8 167.0" stroke="#7d7d7d" stroke-width="1.1" opacity="0.35"/><path d="M64.2 114.0 L64.3 115.2 L64.4 116.5 L64.5 117.7 L64.6 118.9 L64.7 120.2 L64.9 121.4 L65.0 122.7 L65.2 123.9 L65.4 125.2 L65.6 126.4 L65.8 127.6 L66.0 128.9 L66.2 130.1 L66.4 131.4 L66.5 132.6 L66.6 133.8 L66.7 135.1 L66.7 136.3 L66.6 137.6 L66.5 138.8 L66.3 140.1 L66.1 141.3 L65.8 142.5 L65.5 143.8 L65.1 145.0 L64.8 146.3 L64.4 147.5 L64.0 148.8" stroke="#757575" stroke-width="0.8" opacity="0.64"/><path d="M62.6 81.6 L62.4 83.9 L62.4 86.2 L62.6 88.5 L63.0 90.8 L63.5 93.1 L64.1 95.4 L64.7 97.7 L65.3 100.0 L65.9 102.3 L66.3 104.6 L66.6 106.9 L66.8 109.2 L67.0 111.5 L67.1 113.8 L67.3 116.1 L67.5 118.4 L67.8 120.7 L68.1 123.1 L68.5 125.4 L68.9 127.7 L69.3 130.0 L69.5 132.3 L69.5 134.6 L69.4 136.9 L69.0 139.2 L68.5 141.5 L67.9 143.8 L67.2 146.1" stroke="#bfbfbf" stroke-width="0.9" opacity="0.68"/><path d="M67.5 103.9 L67.8 105.7 L68.0 107.5 L68.1 109.3 L68.2 111.1 L68.3 112.9 L68.5 114.7 L68.6 116.5 L68.8 118.3 L69.1 120.1 L69.3 122.0 L69.6 123.8 L70.0 125.6 L70.3 127.4 L70.5 129.2 L70.7 131.0 L70.8 132.8 L70.8 134.6 L70.6 136.4 L70.3 138.3 L70.0 140.1 L69.5 141.9 L69.0 143.7 L68.4 145.5 L67.8 147.3 L67.3 149.1 L66.8 150.9 L66.4 152.7 L66.1 154.5" stroke="#adadad" stroke-width="1.1" opacity="0.63"/><path d="M70.4 102.2 L70.7 104.5 L70.9 106.8 L71.1 109.1 L71.2 111.4 L71.4 113.7 L71.6 116.0 L71.9 118.3 L72.3 120.6 L72.7 122.9 L73.1 125.2 L73.5 127.5 L73.7 129.8 L73.7 132.0 L73.6 134.3 L73.3 136.6 L72.8 138.9 L72.1 141.2 L71.4 143.5 L70.7 145.8 L70.0 148.1 L69.5 150.4 L69.1 152.7 L68.9 155.0 L68.9 157.3 L68.9 159.6 L69.1 161.9 L69.3 164.2 L69.5 166.5" stroke="#9a9a9a" stroke-width="0.6" opacity="0.30"/><path d="M71.0 62.0 L70.9 65.8 L70.4 69.5 L69.7 73.2 L69.0 77.0 L68.7 80.8 L68.8 84.5 L69.4 88.2 L70.3 92.0 L71.3 95.8 L72.1 99.5 L72.7 103.2 L73.0 107.0 L73.2 110.8 L73.6 114.5 L74.1 118.2 L74.8 122.0 L75.4 125.8 L75.7 129.5 L75.6 133.2 L75.0 137.0 L73.9 140.8 L72.8 144.5 L71.7 148.2 L71.1 152.0 L70.9 155.8 L71.0 159.5 L71.3 163.2 L71.5 167.0" stroke="#a7a7a7" stroke-width="0.6" opacity="0.27"/><path d="M74.4 107.4 L74.5 108.6 L74.6 109.8 L74.7 110.9 L74.8 112.1 L74.9 113.3 L75.0 114.5 L75.2 115.6 L75.3 116.8 L75.5 118.0 L75.8 119.2 L76.0 120.3 L76.2 121.5 L76.4 122.7 L76.6 123.9 L76.8 125.0 L76.9 126.2 L77.0 127.4 L77.1 128.6 L77.1 129.7 L77.1 130.9 L77.0 132.1 L76.9 133.3 L76.7 134.5 L76.5 135.6 L76.2 136.8 L75.9 138.0 L75.6 139.2 L75.2 140.3" stroke="#bcbcbc" stroke-width="1.0" opacity="0.64"/><path d="M75.1 62.0 L74.7 65.8 L74.0 69.5 L73.3 73.2 L72.8 77.0 L72.8 80.8 L73.2 84.5 L74.0 88.2 L75.0 92.0 L75.8 95.8 L76.5 99.5 L76.8 103.2 L77.1 107.0 L77.4 110.8 L77.9 114.5 L78.5 118.2 L79.2 122.0 L79.7 125.8 L79.8 129.5 L79.3 133.2 L78.4 137.0 L77.3 140.8 L76.1 144.5 L75.3 148.2 L74.9 152.0 L75.0 155.8 L75.2 159.5 L75.5 163.2 L75.5 167.0" stroke="#dcdcdc" stroke-width="0.7" opacity="0.34"/><path d="M78.4 98.5 L78.6 100.3 L78.8 102.1 L78.9 103.9 L79.0 105.8 L79.2 107.6 L79.3 109.4 L79.5 111.2 L79.8 113.0 L80.1 114.8 L80.4 116.7 L80.8 118.5 L81.1 120.3 L81.4 122.1 L81.6 123.9 L81.8 125.8 L81.8 127.6 L81.7 129.4 L81.5 131.2 L81.2 133.0 L80.7 134.8 L80.2 136.7 L79.6 138.5 L79.0 140.3 L78.5 142.1 L78.0 143.9 L77.5 145.8 L77.2 147.6 L77.0 149.4" stroke="#dcdcdc" stroke-width="0.8" opacity="0.36"/><path d="M80.0 94.3 L80.3 95.8 L80.5 97.4 L80.6 99.0 L80.8 100.6 L80.9 102.2 L81.0 103.7 L81.1 105.3 L81.2 106.9 L81.4 108.5 L81.6 110.1 L81.8 111.6 L82.0 113.2 L82.3 114.8 L82.6 116.4 L82.9 118.0 L83.2 119.5 L83.5 121.1 L83.7 122.7 L83.8 124.3 L83.9 125.8 L83.8 127.4 L83.7 129.0 L83.5 130.6 L83.2 132.2 L82.8 133.7 L82.3 135.3 L81.8 136.9 L81.3 138.5" stroke="#d6d6d6" stroke-width="0.8" opacity="0.32"/><path d="M83.9 103.1 L84.1 105.1 L84.3 107.1 L84.5 109.1 L84.9 111.1 L85.2 113.0 L85.6 115.0 L86.0 117.0 L86.4 119.0 L86.6 121.0 L86.8 123.0 L86.8 125.0 L86.7 127.0 L86.4 128.9 L86.0 130.9 L85.5 132.9 L84.8 134.9 L84.2 136.9 L83.6 138.9 L83.0 140.9 L82.6 142.8 L82.2 144.8 L82.0 146.8 L81.9 148.8 L81.9 150.8 L82.0 152.8 L82.1 154.8 L82.2 156.7 L82.3 158.7" stroke="#939393" stroke-width="0.9" opacity="0.54"/><path d="M85.1 106.8 L85.3 108.0 L85.5 109.3 L85.7 110.5 L85.9 111.8 L86.1 113.0 L86.4 114.3 L86.6 115.5 L86.9 116.8 L87.1 118.0 L87.3 119.3 L87.5 120.5 L87.6 121.8 L87.7 123.0 L87.7 124.2 L87.6 125.5 L87.5 126.7 L87.3 128.0 L87.1 129.2 L86.8 130.5 L86.5 131.7 L86.1 133.0 L85.8 134.2 L85.4 135.5 L85.0 136.7 L84.6 138.0 L84.2 139.2 L83.9 140.5 L83.6 141.7" stroke="#a4a4a4" stroke-width="0.6" opacity="0.37"/><path d="M84.3 62.0 L83.5 65.8 L82.9 69.5 L82.6 73.2 L82.8 77.0 L83.4 80.8 L84.3 84.5 L85.2 88.2 L85.9 92.0 L86.3 95.8 L86.6 99.5 L86.9 103.2 L87.3 107.0 L87.9 110.8 L88.7 114.5 L89.3 118.2 L89.7 122.0 L89.5 125.8 L88.8 129.5 L87.7 133.2 L86.5 137.0 L85.5 140.8 L84.9 144.5 L84.7 148.2 L84.9 152.0 L85.1 155.8 L85.2 159.5 L85.0 163.2 L84.7 167.0" stroke="#888888" stroke-width="0.8" opacity="0.61"/><path d="M87.3 62.0 L86.6 65.8 L86.1 69.5 L86.1 73.2 L86.5 77.0 L87.3 80.8 L88.2 84.5 L89.0 88.2 L89.5 92.0 L89.8 95.8 L90.1 99.5 L90.4 103.2 L91.0 107.0 L91.7 110.8 L92.5 114.5 L93.0 118.2 L93.1 122.0 L92.6 125.8 L91.7 129.5 L90.5 133.2 L89.4 137.0 L88.6 140.8 L88.2 144.5 L88.2 148.2 L88.4 152.0 L88.5 155.8 L88.5 159.5 L88.2 163.2 L87.8 167.0" stroke="#8d8d8d" stroke-width="1.1" opacity="0.38"/><path d="M88.5 62.0 L87.8 65.8 L87.4 69.5 L87.5 73.2 L88.0 77.0 L88.8 80.8 L89.7 84.5 L90.4 88.2 L90.9 92.0 L91.2 95.8 L91.4 99.5 L91.8 103.2 L92.4 107.0 L93.2 110.8 L93.9 114.5 L94.4 118.2 L94.4 122.0 L93.8 125.8 L92.8 129.5 L91.6 133.2 L90.5 137.0 L89.8 140.8 L89.5 144.5 L89.6 148.2 L89.8 152.0 L89.9 155.8 L89.8 159.5 L89.5 163.2 L89.1 167.0" stroke="#727272" stroke-width="0.5" opacity="0.56"/><path d="M90.1 62.0 L89.5 65.8 L89.2 69.5 L89.4 73.2 L90.1 77.0 L90.9 80.8 L91.7 84.5 L92.4 88.2 L92.8 92.0 L93.0 95.8 L93.3 99.5 L93.8 103.2 L94.4 107.0 L95.2 110.8 L95.9 114.5 L96.3 118.2 L96.1 122.0 L95.4 125.8 L94.3 129.5 L93.1 133.2 L92.1 137.0 L91.5 140.8 L91.3 144.5 L91.4 148.2 L91.6 152.0 L91.7 155.8 L91.5 159.5 L91.1 163.2 L90.7 167.0" stroke="#8f8f8f" stroke-width="0.8" opacity="0.47"/><path d="M92.2 62.0 L91.7 65.8 L91.6 69.5 L91.9 73.2 L92.7 77.0 L93.5 80.8 L94.3 84.5 L94.8 88.2 L95.1 92.0 L95.4 95.8 L95.7 99.5 L96.2 103.2 L97.0 107.0 L97.8 110.8 L98.4 114.5 L98.6 118.2 L98.2 122.0 L97.3 125.8 L96.2 129.5 L95.0 133.2 L94.2 137.0 L93.7 140.8 L93.7 144.5 L93.8 148.2 L93.9 152.0 L93.9 155.8 L93.6 159.5 L93.2 163.2 L92.9 167.0" stroke="#888888" stroke-width="0.7" opacity="0.66"/><path d="M94.2 72.4 L94.5 74.0 L94.8 75.6 L95.2 77.2 L95.5 78.9 L95.9 80.5 L96.2 82.1 L96.5 83.7 L96.7 85.3 L96.9 86.9 L97.1 88.5 L97.2 90.1 L97.3 91.7 L97.4 93.3 L97.5 94.9 L97.6 96.5 L97.8 98.1 L98.0 99.8 L98.3 101.4 L98.6 103.0 L98.9 104.6 L99.2 106.2 L99.6 107.8 L99.9 109.4 L100.2 111.0 L100.5 112.6 L100.7 114.2 L100.7 115.8 L100.7 117.4" stroke="#9a9a9a" stroke-width="0.7" opacity="0.73"/><path d="M97.6 73.3 L98.3 76.6 L99.0 79.9 L99.6 83.2 L99.9 86.4 L100.2 89.7 L100.4 93.0 L100.7 96.3 L101.1 99.6 L101.8 102.8 L102.5 106.1 L103.2 109.4 L103.6 112.7 L103.7 115.9 L103.3 119.2 L102.5 122.5 L101.5 125.8 L100.5 129.0 L99.6 132.3 L99.1 135.6 L98.8 138.9 L98.8 142.1 L98.9 145.4 L99.0 148.7 L98.9 152.0 L98.7 155.3 L98.4 158.5 L98.0 161.8 L97.8 165.1" stroke="#bdbdbd" stroke-width="0.9" opacity="0.69"/><path d="M101.8 96.2 L102.1 98.3 L102.4 100.3 L102.9 102.4 L103.3 104.4 L103.8 106.5 L104.2 108.5 L104.5 110.6 L104.7 112.6 L104.8 114.7 L104.6 116.7 L104.3 118.8 L103.9 120.8 L103.3 122.9 L102.7 124.9 L102.0 127.0 L101.4 129.0 L100.9 131.1 L100.4 133.1 L100.1 135.1 L99.9 137.2 L99.8 139.2 L99.8 141.3 L99.9 143.3 L100.0 145.4 L100.0 147.4 L100.0 149.5 L100.0 151.5 L99.9 153.6" stroke="#a3a3a3" stroke-width="0.5" opacity="0.49"/><path d="M103.2 86.9 L103.3 88.0 L103.4 89.1 L103.4 90.3 L103.5 91.4 L103.6 92.5 L103.7 93.7 L103.8 94.8 L104.0 96.0 L104.2 97.1 L104.4 98.2 L104.6 99.4 L104.8 100.5 L105.1 101.6 L105.3 102.8 L105.6 103.9 L105.9 105.0 L106.1 106.2 L106.3 107.3 L106.5 108.4 L106.7 109.6 L106.8 110.7 L106.9 111.8 L106.9 113.0 L106.9 114.1 L106.8 115.2 L106.6 116.4 L106.5 117.5 L106.2 118.6" stroke="#6e6e6e" stroke-width="0.7" opacity="0.39"/><path d="M109.4 108.7 L109.5 110.0 L109.5 111.4 L109.5 112.8 L109.4 114.1 L109.2 115.5 L108.9 116.9 L108.6 118.2 L108.2 119.6 L107.8 120.9 L107.4 122.3 L107.0 123.7 L106.6 125.0 L106.2 126.4 L105.8 127.7 L105.5 129.1 L105.2 130.5 L105.0 131.8 L104.8 133.2 L104.7 134.5 L104.6 135.9 L104.6 137.3 L104.6 138.6 L104.6 140.0 L104.7 141.3 L104.7 142.7 L104.7 144.1 L104.7 145.4 L104.7 146.8" stroke="#959595" stroke-width="0.7" opacity="0.64"/><path d="M108.7 93.8 L109.1 96.2 L109.6 98.5 L110.2 100.9 L110.7 103.3 L111.2 105.7 L111.5 108.1 L111.6 110.5 L111.4 112.9 L111.1 115.3 L110.5 117.6 L109.8 120.0 L109.1 122.4 L108.3 124.8 L107.7 127.2 L107.2 129.6 L106.9 132.0 L106.7 134.3 L106.7 136.7 L106.7 139.1 L106.8 141.5 L106.8 143.9 L106.7 146.3 L106.6 148.7 L106.4 151.0 L106.1 153.4 L105.9 155.8 L105.6 158.2 L105.5 160.6" stroke="#b3b3b3" stroke-width="1.0" opacity="0.67"/><path d="M107.5 62.0 L108.0 65.8 L108.7 69.5 L109.4 73.2 L110.0 77.0 L110.3 80.8 L110.5 84.5 L110.8 88.2 L111.3 92.0 L112.0 95.8 L112.9 99.5 L113.7 103.2 L114.2 107.0 L114.2 110.8 L113.6 114.5 L112.6 118.2 L111.4 122.0 L110.4 125.8 L109.7 129.5 L109.4 133.2 L109.4 137.0 L109.4 140.8 L109.4 144.5 L109.2 148.2 L108.7 152.0 L108.3 155.8 L108.1 159.5 L108.2 163.2 L108.6 167.0" stroke="#c8c8c8" stroke-width="0.6" opacity="0.44"/><path d="M109.5 62.0 L110.1 65.8 L110.9 69.5 L111.5 73.2 L112.0 77.0 L112.3 80.8 L112.5 84.5 L112.8 88.2 L113.4 92.0 L114.2 95.8 L115.1 99.5 L115.8 103.2 L116.2 107.0 L116.0 110.8 L115.3 114.5 L114.2 118.2 L113.0 122.0 L112.1 125.8 L111.5 129.5 L111.3 133.2 L111.3 137.0 L111.4 140.8 L111.3 144.5 L110.9 148.2 L110.5 152.0 L110.1 155.8 L110.0 159.5 L110.2 163.2 L110.6 167.0" stroke="#959595" stroke-width="0.9" opacity="0.51"/><path d="M111.1 62.0 L111.7 65.8 L112.5 69.5 L113.1 73.2 L113.5 77.0 L113.8 80.8 L114.0 84.5 L114.3 88.2 L114.9 92.0 L115.8 95.8 L116.7 99.5 L117.4 103.2 L117.6 107.0 L117.3 110.8 L116.5 114.5 L115.4 118.2 L114.2 122.0 L113.4 125.8 L112.9 129.5 L112.7 133.2 L112.8 137.0 L112.8 140.8 L112.6 144.5 L112.3 148.2 L111.8 152.0 L111.5 155.8 L111.4 159.5 L111.7 163.2 L112.2 167.0" stroke="#959595" stroke-width="1.0" opacity="0.45"/><path d="M119.4 108.5 L119.1 110.4 L118.7 112.3 L118.2 114.1 L117.6 116.0 L117.0 117.9 L116.5 119.7 L116.0 121.6 L115.5 123.5 L115.2 125.3 L114.9 127.2 L114.7 129.0 L114.7 130.9 L114.7 132.8 L114.7 134.6 L114.7 136.5 L114.7 138.4 L114.7 140.2 L114.6 142.1 L114.4 144.0 L114.3 145.8 L114.1 147.7 L113.8 149.5 L113.6 151.4 L113.4 153.3 L113.3 155.1 L113.3 157.0 L113.3 158.9 L113.4 160.7" stroke="#747474" stroke-width="1.0" opacity="0.37"/><path d="M116.5 62.0 L117.2 65.8 L117.8 69.5 L118.3 73.2 L118.5 77.0 L118.7 80.8 L119.0 84.5 L119.6 88.2 L120.4 92.0 L121.3 95.8 L122.1 99.5 L122.5 103.2 L122.3 107.0 L121.6 110.8 L120.6 114.5 L119.4 118.2 L118.5 122.0 L117.9 125.8 L117.7 129.5 L117.7 133.2 L117.7 137.0 L117.5 140.8 L117.2 144.5 L116.7 148.2 L116.3 152.0 L116.2 155.8 L116.4 159.5 L116.9 163.2 L117.4 167.0" stroke="#747474" stroke-width="1.0" opacity="0.46"/><path d="M119.1 62.0 L119.8 65.8 L120.3 69.5 L120.7 73.2 L120.9 77.0 L121.1 80.8 L121.5 84.5 L122.1 88.2 L123.0 92.0 L124.0 95.8 L124.6 99.5 L124.8 103.2 L124.5 107.0 L123.6 110.8 L122.5 114.5 L121.4 118.2 L120.6 122.0 L120.1 125.8 L120.0 129.5 L120.0 133.2 L119.9 137.0 L119.7 140.8 L119.3 144.5 L118.8 148.2 L118.5 152.0 L118.5 155.8 L118.9 159.5 L119.4 163.2 L119.9 167.0" stroke="#909090" stroke-width="1.1" opacity="0.65"/><path d="M121.5 75.0 L121.6 77.2 L121.8 79.4 L121.9 81.6 L122.2 83.8 L122.5 86.0 L123.0 88.2 L123.5 90.3 L124.0 92.5 L124.6 94.7 L125.1 96.9 L125.4 99.1 L125.6 101.3 L125.6 103.5 L125.4 105.7 L125.0 107.8 L124.4 110.0 L123.8 112.2 L123.1 114.4 L122.5 116.6 L121.9 118.8 L121.4 121.0 L121.1 123.1 L120.9 125.3 L120.8 127.5 L120.8 129.7 L120.8 131.9 L120.8 134.1 L120.7 136.3" stroke="#a4a4a4" stroke-width="0.6" opacity="0.27"/><path d="M123.8 64.4 L124.1 66.5 L124.3 68.7 L124.5 70.8 L124.6 73.0 L124.7 75.2 L124.8 77.3 L124.9 79.5 L125.2 81.7 L125.5 83.8 L125.9 86.0 L126.5 88.2 L127.0 90.3 L127.6 92.5 L128.0 94.6 L128.4 96.8 L128.7 99.0 L128.7 101.1 L128.5 103.3 L128.2 105.5 L127.7 107.6 L127.1 109.8 L126.4 112.0 L125.8 114.1 L125.2 116.3 L124.7 118.5 L124.3 120.6 L124.1 122.8 L123.9 124.9" stroke="#b2b2b2" stroke-width="1.0" opacity="0.52"/><path d="M129.0 87.9 L129.5 89.8 L130.0 91.8 L130.4 93.7 L130.7 95.6 L130.9 97.6 L131.0 99.5 L130.9 101.4 L130.6 103.3 L130.2 105.3 L129.8 107.2 L129.2 109.1 L128.6 111.1 L128.0 113.0 L127.5 114.9 L127.1 116.9 L126.7 118.8 L126.5 120.7 L126.3 122.6 L126.2 124.6 L126.2 126.5 L126.2 128.4 L126.2 130.4 L126.1 132.3 L126.0 134.2 L125.9 136.1 L125.7 138.1 L125.4 140.0 L125.2 141.9" stroke="#909090" stroke-width="0.8" opacity="0.49"/><path d="M127.9 62.0 L128.3 65.8 L128.6 69.5 L128.7 73.2 L128.9 77.0 L129.4 80.8 L130.2 84.5 L131.1 88.2 L132.1 92.0 L132.7 95.8 L132.8 99.5 L132.3 103.2 L131.3 107.0 L130.2 110.8 L129.2 114.5 L128.5 118.2 L128.1 122.0 L128.0 125.8 L128.0 129.5 L127.8 133.2 L127.5 137.0 L127.0 140.8 L126.5 144.5 L126.3 148.2 L126.4 152.0 L126.8 155.8 L127.4 159.5 L127.9 163.2 L128.0 167.0" stroke="#c4c4c4" stroke-width="1.0" opacity="0.61"/><path d="M130.1 70.9 L130.2 72.2 L130.2 73.5 L130.3 74.9 L130.4 76.2 L130.6 77.5 L130.7 78.9 L130.9 80.2 L131.2 81.5 L131.5 82.8 L131.8 84.2 L132.1 85.5 L132.5 86.8 L132.8 88.2 L133.2 89.5 L133.5 90.8 L133.8 92.2 L134.0 93.5 L134.2 94.8 L134.3 96.2 L134.3 97.5 L134.2 98.8 L134.1 100.2 L133.9 101.5 L133.7 102.8 L133.4 104.2 L133.0 105.5 L132.6 106.8 L132.2 108.2" stroke="#dbdbdb" stroke-width="0.7" opacity="0.72"/><path d="M134.8 107.7 L134.3 109.4 L133.8 111.1 L133.4 112.9 L133.1 114.6 L132.8 116.4 L132.7 118.1 L132.5 119.8 L132.5 121.6 L132.4 123.3 L132.4 125.1 L132.4 126.8 L132.3 128.5 L132.2 130.3 L132.1 132.0 L131.9 133.8 L131.7 135.5 L131.4 137.2 L131.2 139.0 L131.0 140.7 L130.8 142.5 L130.6 144.2 L130.6 145.9 L130.6 147.7 L130.7 149.4 L130.9 151.2 L131.1 152.9 L131.4 154.7 L131.7 156.4" stroke="#878787" stroke-width="0.8" opacity="0.72"/><path d="M134.7 62.0 L134.9 65.8 L135.0 69.5 L135.2 73.2 L135.7 77.0 L136.5 80.8 L137.5 84.5 L138.5 88.2 L139.1 92.0 L139.2 95.8 L138.7 99.5 L137.8 103.2 L136.7 107.0 L135.7 110.8 L135.0 114.5 L134.6 118.2 L134.5 122.0 L134.4 125.8 L134.2 129.5 L133.8 133.2 L133.3 137.0 L132.8 140.8 L132.6 144.5 L132.7 148.2 L133.2 152.0 L133.8 155.8 L134.3 159.5 L134.4 163.2 L134.0 167.0" stroke="#d9d9d9" stroke-width="0.8" opacity="0.69"/><path d="M139.4 101.5 L139.1 102.8 L138.7 104.0 L138.3 105.3 L137.9 106.6 L137.6 107.9 L137.2 109.2 L136.9 110.5 L136.6 111.8 L136.4 113.1 L136.2 114.4 L136.1 115.7 L136.0 117.0 L135.9 118.2 L135.9 119.5 L135.8 120.8 L135.8 122.1 L135.8 123.4 L135.8 124.7 L135.7 126.0 L135.6 127.3 L135.6 128.6 L135.4 129.9 L135.3 131.1 L135.1 132.4 L135.0 133.7 L134.8 135.0 L134.6 136.3 L134.4 137.6" stroke="#cccccc" stroke-width="1.0" opacity="0.73"/><path d="M138.9 62.0 L139.0 65.8 L139.2 69.5 L139.5 73.2 L140.2 77.0 L141.2 80.8 L142.2 84.5 L143.0 88.2 L143.3 92.0 L143.0 95.8 L142.3 99.5 L141.2 103.2 L140.1 107.0 L139.3 110.8 L138.8 114.5 L138.6 118.2 L138.5 122.0 L138.4 125.8 L138.0 129.5 L137.5 133.2 L137.0 137.0 L136.6 140.8 L136.6 144.5 L137.0 148.2 L137.6 152.0 L138.2 155.8 L138.5 159.5 L138.3 163.2 L137.7 167.0" stroke="#969696" stroke-width="0.8" opacity="0.53"/><path d="M140.4 62.0 L140.5 65.8 L140.7 69.5 L141.2 73.2 L141.9 77.0 L142.9 80.8 L143.9 84.5 L144.6 88.2 L144.8 92.0 L144.4 95.8 L143.5 99.5 L142.5 103.2 L141.4 107.0 L140.7 110.8 L140.3 114.5 L140.1 118.2 L140.0 122.0 L139.8 125.8 L139.4 129.5 L138.8 133.2 L138.3 137.0 L138.1 140.8 L138.2 144.5 L138.6 148.2 L139.2 152.0 L139.8 155.8 L140.0 159.5 L139.7 163.2 L139.0 167.0" stroke="#a8a8a8" stroke-width="0.5" opacity="0.69"/><path d="M145.2 99.2 L144.8 100.6 L144.4 102.0 L144.0 103.4 L143.6 104.7 L143.3 106.1 L143.0 107.5 L142.7 108.9 L142.5 110.3 L142.3 111.6 L142.2 113.0 L142.1 114.4 L142.0 115.8 L142.0 117.2 L142.0 118.5 L141.9 119.9 L141.9 121.3 L141.8 122.7 L141.7 124.1 L141.6 125.4 L141.4 126.8 L141.3 128.2 L141.1 129.6 L140.9 131.0 L140.6 132.3 L140.4 133.7 L140.3 135.1 L140.1 136.5 L140.0 137.8" stroke="#c0c0c0" stroke-width="0.7" opacity="0.36"/><path d="M144.7 112.4 L144.6 113.8 L144.6 115.3 L144.5 116.8 L144.5 118.3 L144.4 119.7 L144.3 121.2 L144.2 122.7 L144.1 124.2 L143.9 125.6 L143.7 127.1 L143.5 128.6 L143.2 130.0 L143.0 131.5 L142.8 133.0 L142.6 134.5 L142.5 135.9 L142.4 137.4 L142.3 138.9 L142.4 140.4 L142.5 141.8 L142.6 143.3 L142.8 144.8 L143.0 146.2 L143.3 147.7 L143.5 149.2 L143.8 150.7 L144.0 152.1 L144.2 153.6" stroke="#969696" stroke-width="1.0" opacity="0.55"/><path d="M146.9 62.0 L147.1 65.8 L147.5 69.5 L148.3 73.2 L149.3 77.0 L150.3 80.8 L151.1 84.5 L151.3 88.2 L150.9 92.0 L150.0 95.8 L149.0 99.5 L148.0 103.2 L147.3 107.0 L146.8 110.8 L146.7 114.5 L146.5 118.2 L146.3 122.0 L145.8 125.8 L145.2 129.5 L144.7 133.2 L144.4 137.0 L144.5 140.8 L145.0 144.5 L145.7 148.2 L146.2 152.0 L146.4 155.8 L146.2 159.5 L145.4 163.2 L144.5 167.0" stroke="#a3a3a3" stroke-width="0.7" opacity="0.34"/><path d="M151.5 75.6 L152.3 78.7 L153.0 81.8 L153.4 84.8 L153.4 87.9 L153.0 91.0 L152.3 94.0 L151.5 97.1 L150.6 100.1 L149.9 103.2 L149.4 106.3 L149.1 109.3 L148.9 112.4 L148.8 115.5 L148.6 118.5 L148.4 121.6 L147.9 124.6 L147.5 127.7 L147.0 130.8 L146.7 133.8 L146.6 136.9 L146.7 140.0 L147.1 143.0 L147.7 146.1 L148.2 149.1 L148.5 152.2 L148.6 155.3 L148.3 158.3 L147.8 161.4" stroke="#838383" stroke-width="0.6" opacity="0.68"/><path d="M151.6 62.0 L151.9 65.8 L152.7 69.5 L153.6 73.2 L154.7 77.0 L155.5 80.8 L155.9 84.5 L155.7 88.2 L154.9 92.0 L153.9 95.8 L152.9 99.5 L152.1 103.2 L151.6 107.0 L151.4 110.8 L151.3 114.5 L151.0 118.2 L150.6 122.0 L150.0 125.8 L149.4 129.5 L149.0 133.2 L149.0 137.0 L149.4 140.8 L150.1 144.5 L150.7 148.2 L151.0 152.0 L150.9 155.8 L150.3 159.5 L149.4 163.2 L148.5 167.0" stroke="#959595" stroke-width="0.7" opacity="0.64"/><path d="M154.6 66.1 L154.8 67.5 L155.2 68.8 L155.5 70.2 L155.9 71.5 L156.3 72.9 L156.7 74.3 L157.0 75.6 L157.4 77.0 L157.7 78.3 L157.9 79.7 L158.1 81.1 L158.2 82.4 L158.3 83.8 L158.2 85.1 L158.1 86.5 L157.9 87.9 L157.6 89.2 L157.3 90.6 L157.0 91.9 L156.6 93.3 L156.2 94.6 L155.9 96.0 L155.5 97.4 L155.2 98.7 L154.9 100.1 L154.6 101.4 L154.4 102.8 L154.2 104.2" stroke="#d4d4d4" stroke-width="1.0" opacity="0.69"/><path d="M158.0 69.5 L158.6 71.7 L159.2 73.8 L159.7 76.0 L160.2 78.1 L160.4 80.3 L160.5 82.4 L160.4 84.6 L160.1 86.7 L159.7 88.9 L159.2 91.0 L158.6 93.2 L158.0 95.4 L157.4 97.5 L157.0 99.7 L156.6 101.8 L156.4 104.0 L156.2 106.1 L156.1 108.3 L156.0 110.4 L155.9 112.6 L155.7 114.7 L155.5 116.9 L155.2 119.0 L154.9 121.2 L154.5 123.3 L154.1 125.5 L153.8 127.6 L153.6 129.8" stroke="#818181" stroke-width="0.5" opacity="0.55"/><path d="M158.3 106.4 L158.2 108.1 L158.1 109.8 L158.0 111.5 L157.9 113.2 L157.7 114.9 L157.5 116.6 L157.2 118.3 L157.0 120.0 L156.7 121.7 L156.4 123.4 L156.1 125.1 L155.9 126.8 L155.7 128.5 L155.6 130.2 L155.6 131.9 L155.7 133.6 L155.9 135.3 L156.1 137.0 L156.4 138.6 L156.7 140.3 L157.0 142.0 L157.3 143.7 L157.6 145.4 L157.7 147.1 L157.8 148.8 L157.8 150.5 L157.6 152.2 L157.4 153.9" stroke="#d1d1d1" stroke-width="0.7" opacity="0.59"/><path d="M84.1 42.0 L84.5 44.1 L84.9 46.1 L85.3 48.2 L85.6 50.3 L85.9 52.4 L85.9 54.4 L85.9 56.5 L85.7 58.6 L85.4 60.6 L85.0 62.7 L84.6 64.8 L84.2 66.9 L83.9 68.9 L83.7 71.0 L83.6 73.1 L83.7 75.1 L83.9 77.2 L84.2 79.3 L84.7 81.4 L85.2 83.4 L85.7 85.5 L86.1 87.6 L86.6 89.6 L86.9 91.7 L87.1 93.8 L87.3 95.9 L87.5 97.9 L87.6 100.0" stroke="#c7c7c7" stroke-width="1.0" opacity="0.50"/><path d="M86.6 42.0 L87.0 44.1 L87.4 46.1 L87.7 48.2 L88.0 50.3 L88.1 52.4 L88.1 54.4 L88.0 56.5 L87.7 58.6 L87.4 60.6 L87.0 62.7 L86.6 64.8 L86.2 66.9 L86.0 68.9 L85.8 71.0 L85.9 73.1 L86.0 75.1 L86.3 77.2 L86.7 79.3 L87.2 81.4 L87.7 83.4 L88.2 85.5 L88.6 87.6 L88.9 89.6 L89.2 91.7 L89.4 93.8 L89.6 95.9 L89.7 97.9 L89.9 100.0" stroke="#d0d0d0" stroke-width="0.6" opacity="0.31"/><path d="M90.4 53.3 L90.3 54.4 L90.2 55.4 L90.1 56.5 L89.9 57.6 L89.7 58.7 L89.5 59.8 L89.3 60.9 L89.1 61.9 L88.9 63.0 L88.7 64.1 L88.5 65.2 L88.3 66.3 L88.2 67.4 L88.1 68.5 L88.1 69.5 L88.1 70.6 L88.1 71.7 L88.1 72.8 L88.2 73.9 L88.4 75.0 L88.6 76.0 L88.8 77.1 L89.0 78.2 L89.2 79.3 L89.5 80.4 L89.7 81.5 L90.0 82.5 L90.2 83.6" stroke="#969696" stroke-width="1.0" opacity="0.69"/><path d="M91.9 44.2 L92.2 45.6 L92.4 47.1 L92.5 48.6 L92.6 50.0 L92.6 51.5 L92.5 52.9 L92.4 54.4 L92.2 55.9 L92.0 57.3 L91.7 58.8 L91.4 60.3 L91.1 61.7 L90.8 63.2 L90.6 64.7 L90.4 66.1 L90.3 67.6 L90.3 69.0 L90.3 70.5 L90.4 72.0 L90.6 73.4 L90.8 74.9 L91.1 76.4 L91.4 77.8 L91.7 79.3 L92.1 80.8 L92.4 82.2 L92.7 83.7 L93.0 85.1" stroke="#818181" stroke-width="0.9" opacity="0.31"/><path d="M94.0 42.0 L94.3 44.1 L94.6 46.1 L94.8 48.2 L94.8 50.3 L94.7 52.4 L94.4 54.4 L94.1 56.5 L93.7 58.6 L93.3 60.6 L92.9 62.7 L92.7 64.8 L92.5 66.9 L92.5 68.9 L92.7 71.0 L92.9 73.1 L93.3 75.1 L93.8 77.2 L94.2 79.3 L94.7 81.4 L95.1 83.4 L95.4 85.5 L95.7 87.6 L95.9 89.6 L96.1 91.7 L96.2 93.8 L96.3 95.9 L96.5 97.9 L96.8 100.0" stroke="#cacaca" stroke-width="1.0" opacity="0.64"/><path d="M96.3 55.1 L96.2 55.9 L96.0 56.7 L95.9 57.5 L95.7 58.3 L95.6 59.1 L95.4 59.9 L95.3 60.7 L95.2 61.5 L95.0 62.3 L94.9 63.1 L94.9 63.9 L94.8 64.7 L94.8 65.5 L94.7 66.3 L94.7 67.1 L94.8 67.9 L94.8 68.7 L94.9 69.5 L95.0 70.3 L95.1 71.1 L95.2 71.9 L95.3 72.7 L95.5 73.5 L95.6 74.3 L95.8 75.1 L96.0 75.9 L96.2 76.7 L96.3 77.5" stroke="#a8a8a8" stroke-width="0.8" opacity="0.56"/><path d="M98.8 42.0 L99.1 44.1 L99.2 46.1 L99.2 48.2 L99.1 50.3 L98.8 52.4 L98.5 54.4 L98.1 56.5 L97.7 58.6 L97.3 60.6 L97.1 62.7 L97.0 64.8 L97.0 66.9 L97.2 68.9 L97.5 71.0 L97.9 73.1 L98.3 75.1 L98.8 77.2 L99.2 79.3 L99.6 81.4 L99.9 83.4 L100.1 85.5 L100.3 87.6 L100.4 89.6 L100.6 91.7 L100.7 93.8 L100.9 95.9 L101.2 97.9 L101.5 100.0" stroke="#9f9f9f" stroke-width="0.8" opacity="0.34"/><path d="M101.3 42.4 L101.4 43.5 L101.5 44.7 L101.5 45.8 L101.5 47.0 L101.4 48.2 L101.3 49.3 L101.1 50.5 L101.0 51.6 L100.7 52.8 L100.5 53.9 L100.3 55.1 L100.1 56.2 L99.9 57.4 L99.7 58.6 L99.5 59.7 L99.4 60.9 L99.3 62.0 L99.2 63.2 L99.2 64.3 L99.2 65.5 L99.3 66.6 L99.4 67.8 L99.6 69.0 L99.8 70.1 L100.0 71.3 L100.2 72.4 L100.5 73.6 L100.7 74.7" stroke="#cfcfcf" stroke-width="0.6" opacity="0.31"/><path d="M103.6 42.0 L103.7 44.1 L103.7 46.1 L103.5 48.2 L103.2 50.3 L102.8 52.4 L102.4 54.4 L102.0 56.5 L101.7 58.6 L101.5 60.6 L101.4 62.7 L101.5 64.8 L101.7 66.9 L102.0 68.9 L102.4 71.0 L102.8 73.1 L103.3 75.1 L103.7 77.2 L104.0 79.3 L104.3 81.4 L104.5 83.4 L104.7 85.5 L104.8 87.6 L104.9 89.6 L105.1 91.7 L105.3 93.8 L105.6 95.9 L106.0 97.9 L106.4 100.0" stroke="#828282" stroke-width="0.6" opacity="0.29"/><path d="M104.1 56.4 L103.9 57.9 L103.7 59.4 L103.7 60.9 L103.7 62.4 L103.8 63.9 L103.9 65.4 L104.1 66.9 L104.4 68.4 L104.7 69.9 L105.0 71.4 L105.3 72.9 L105.6 74.4 L105.9 75.9 L106.1 77.4 L106.3 78.9 L106.5 80.5 L106.7 82.0 L106.8 83.5 L106.9 85.0 L107.0 86.5 L107.0 88.0 L107.2 89.5 L107.3 91.0 L107.5 92.5 L107.7 94.0 L107.9 95.5 L108.2 97.0 L108.5 98.5" stroke="#7f7f7f" stroke-width="1.0" opacity="0.28"/><path d="M108.1 42.0 L108.1 44.1 L107.9 46.1 L107.5 48.2 L107.2 50.3 L106.8 52.4 L106.4 54.4 L106.1 56.5 L105.9 58.6 L105.9 60.6 L106.0 62.7 L106.2 64.8 L106.6 66.9 L107.0 68.9 L107.4 71.0 L107.8 73.1 L108.2 75.1 L108.5 77.2 L108.7 79.3 L108.9 81.4 L109.0 83.4 L109.1 85.5 L109.3 87.6 L109.4 89.6 L109.7 91.7 L110.0 93.8 L110.4 95.9 L110.9 97.9 L111.4 100.0" stroke="#bfbfbf" stroke-width="0.9" opacity="0.62"/><path d="M110.3 42.5 L110.2 43.2 L110.2 43.9 L110.1 44.6 L110.0 45.3 L109.9 46.0 L109.8 46.7 L109.7 47.4 L109.6 48.1 L109.4 48.8 L109.3 49.5 L109.2 50.2 L109.0 50.9 L108.9 51.6 L108.8 52.3 L108.7 53.0 L108.5 53.7 L108.4 54.4 L108.4 55.1 L108.3 55.8 L108.2 56.4 L108.2 57.1 L108.1 57.8 L108.1 58.5 L108.1 59.2 L108.1 59.9 L108.2 60.6 L108.2 61.3 L108.3 62.0" stroke="#9a9a9a" stroke-width="0.8" opacity="0.36"/><path d="M110.6 54.0 L110.5 55.2 L110.4 56.3 L110.4 57.5 L110.4 58.6 L110.4 59.8 L110.5 60.9 L110.7 62.1 L110.8 63.2 L111.0 64.4 L111.2 65.5 L111.5 66.7 L111.7 67.8 L111.9 69.0 L112.1 70.1 L112.3 71.3 L112.5 72.4 L112.7 73.5 L112.9 74.7 L113.0 75.8 L113.1 77.0 L113.2 78.1 L113.3 79.3 L113.3 80.4 L113.4 81.6 L113.5 82.7 L113.5 83.9 L113.6 85.0 L113.7 86.2" stroke="#949494" stroke-width="0.7" opacity="0.29"/><path d="M113.8 46.7 L113.6 47.7 L113.4 48.7 L113.2 49.7 L113.1 50.7 L112.9 51.7 L112.8 52.7 L112.7 53.7 L112.6 54.7 L112.6 55.7 L112.6 56.7 L112.6 57.7 L112.7 58.7 L112.8 59.7 L112.9 60.7 L113.0 61.7 L113.2 62.7 L113.4 63.7 L113.5 64.7 L113.7 65.7 L113.9 66.7 L114.1 67.7 L114.3 68.7 L114.5 69.7 L114.7 70.7 L114.8 71.7 L115.0 72.7 L115.1 73.7 L115.2 74.7" stroke="#c1c1c1" stroke-width="0.5" opacity="0.28"/><path d="M117.0 70.3 L117.1 71.3 L117.3 72.3 L117.4 73.3 L117.4 74.3 L117.5 75.3 L117.6 76.3 L117.6 77.3 L117.7 78.3 L117.7 79.3 L117.8 80.3 L117.8 81.3 L117.9 82.3 L118.0 83.3 L118.1 84.3 L118.2 85.3 L118.3 86.3 L118.5 87.3 L118.6 88.3 L118.8 89.3 L119.0 90.3 L119.3 91.3 L119.5 92.3 L119.7 93.3 L120.0 94.3 L120.2 95.3 L120.5 96.3 L120.7 97.3 L120.9 98.3" stroke="#c8c8c8" stroke-width="0.9" opacity="0.30"/><path d="M118.8 66.8 L119.0 67.9 L119.2 69.1 L119.4 70.3 L119.5 71.4 L119.6 72.6 L119.7 73.8 L119.8 74.9 L119.8 76.1 L119.9 77.3 L119.9 78.4 L120.0 79.6 L120.1 80.8 L120.2 81.9 L120.3 83.1 L120.4 84.3 L120.6 85.5 L120.7 86.6 L121.0 87.8 L121.2 89.0 L121.5 90.1 L121.7 91.3 L122.0 92.5 L122.3 93.6 L122.6 94.8 L122.9 96.0 L123.2 97.1 L123.4 98.3 L123.6 99.5" stroke="#aaaaaa" stroke-width="1.1" opacity="0.41"/><path d="M120.6 62.8 L120.8 64.1 L121.0 65.3 L121.2 66.6 L121.4 67.8 L121.6 69.0 L121.7 70.3 L121.8 71.5 L121.9 72.8 L122.0 74.0 L122.0 75.3 L122.1 76.5 L122.1 77.8 L122.2 79.0 L122.3 80.2 L122.4 81.5 L122.5 82.7 L122.7 84.0 L122.9 85.2 L123.1 86.5 L123.4 87.7 L123.7 89.0 L124.0 90.2 L124.3 91.4 L124.6 92.7 L124.9 93.9 L125.2 95.2 L125.5 96.4 L125.7 97.7" stroke="#838383" stroke-width="1.1" opacity="0.57"/><path d="M122.6 42.0 L122.2 44.1 L121.9 46.1 L121.7 48.2 L121.5 50.3 L121.6 52.4 L121.7 54.4 L121.9 56.5 L122.3 58.6 L122.6 60.6 L123.0 62.7 L123.4 64.8 L123.6 66.9 L123.9 68.9 L124.0 71.0 L124.1 73.1 L124.2 75.1 L124.3 77.2 L124.5 79.3 L124.7 81.4 L125.0 83.4 L125.4 85.5 L125.8 87.6 L126.3 89.6 L126.9 91.7 L127.4 93.8 L127.8 95.9 L128.1 97.9 L128.3 100.0" stroke="#8c8c8c" stroke-width="1.1" opacity="0.51"/><path d="M125.3 62.0 L125.5 63.1 L125.7 64.2 L125.8 65.3 L125.9 66.4 L126.0 67.5 L126.1 68.6 L126.2 69.7 L126.3 70.8 L126.3 71.9 L126.4 73.0 L126.4 74.1 L126.5 75.2 L126.5 76.3 L126.6 77.4 L126.7 78.5 L126.8 79.6 L126.9 80.7 L127.1 81.8 L127.3 82.9 L127.5 84.0 L127.7 85.1 L128.0 86.2 L128.3 87.3 L128.5 88.4 L128.8 89.5 L129.1 90.6 L129.4 91.7 L129.6 92.8" stroke="#7b7b7b" stroke-width="1.0" opacity="0.38"/><path d="M89.6 13 L112.3 12.9" stroke="#929292" stroke-width="1" opacity="0.6"/><path d="M90.4 16 L111.9 15.5" stroke="#9b9b9b" stroke-width="1" opacity="0.6"/><path d="M91.0 19 L110.1 19.9" stroke="#a9a9a9" stroke-width="1" opacity="0.6"/><path d="M90.0 22 L111.1 21.4" stroke="#a3a3a3" stroke-width="1" opacity="0.6"/><path d="M90.7 25 L110.1 24.1" stroke="#a9a9a9" stroke-width="1" opacity="0.6"/><path d="M90.6 28 L111.4 28.2" stroke="#aaaaaa" stroke-width="1" opacity="0.6"/><path d="M90.3 31 L111.5 31.4" stroke="#a9a9a9" stroke-width="1" opacity="0.6"/><path d="M90.5 34 L111.4 34.1" stroke="#6e6e6e" stroke-width="1" opacity="0.6"/><path d="M89.7 37 L110.9 38.0" stroke="#929292" stroke-width="1" opacity="0.6"/><path d="M90.0 12 L90.5 38" stroke="#a0a0a0" stroke-width="0.9" opacity="0.5"/><path d="M94.4 12 L94.0 38" stroke="#a7a7a7" stroke-width="0.9" opacity="0.5"/><path d="M98.8 12 L98.3 38" stroke="#a7a7a7" stroke-width="0.9" opacity="0.5"/><path d="M103.2 12 L103.4 38" stroke="#a0a0a0" stroke-width="0.9" opacity="0.5"/><path d="M107.6 12 L107.0 38" stroke="#adadad" stroke-width="0.9" opacity="0.5"/><path d="M112.0 12 L112.9 38" stroke="#7e7e7e" stroke-width="0.9" opacity="0.5"/><path d="M44.0 2 C36.0 16 34.0 30 40.0 48 C44.0 58 50.0 62 56.0 66.0" stroke="#c4c4c4" stroke-width="1.1" opacity="0.7"/><path d="M41.8 2 C33.8 16 31.8 30 38.7 48 C42.9 58 49.3 62 56.0 66.9" stroke="#c5c5c5" stroke-width="1.1" opacity="0.7"/><path d="M39.6 2 C31.6 16 29.6 30 37.4 48 C41.8 58 48.7 62 56.0 67.8" stroke="#bcbcbc" stroke-width="1.1" opacity="0.7"/><path d="M37.4 2 C29.4 16 27.4 30 36.0 48 C40.7 58 48.0 62 56.0 68.6" stroke="#9b9b9b" stroke-width="1.1" opacity="0.7"/><path d="M35.2 2 C27.2 16 25.2 30 34.7 48 C39.6 58 47.4 62 56.0 69.5" stroke="#a3a3a3" stroke-width="1.1" opacity="0.7"/><path d="M33.0 2 C25.0 16 23.0 30 33.4 48 C38.5 58 46.7 62 56.0 70.4" stroke="#7c7c7c" stroke-width="1.1" opacity="0.7"/><path d="M36.0 64 C26.0 80 22.0 100 23.0 120 C24.0 130 22.0 140 24.0 150" stroke="#8f8f8f" stroke-width="1" opacity="0.6"/><path d="M40.5 64 C30.5 80 26.5 100 27.5 120 C28.5 130 26.5 140 28.5 150" stroke="#919191" stroke-width="1" opacity="0.6"/><path d="M45.0 64 C35.0 80 31.0 100 32.0 120 C33.0 130 31.0 140 33.0 150" stroke="#7b7b7b" stroke-width="1" opacity="0.6"/><path d="M49.5 64 C39.5 80 35.5 100 36.5 120 C37.5 130 35.5 140 37.5 150" stroke="#717171" stroke-width="1" opacity="0.6"/><path d="M54.0 64 C44.0 80 40.0 100 41.0 120 C42.0 130 40.0 140 42.0 150" stroke="#a0a0a0" stroke-width="1" opacity="0.6"/><path d="M166.0 2 C154.0 10 146.0 26 140.0 44 C138.0 56 132.0 64 130.0 80" stroke="#ababab" stroke-width="1.1" opacity="0.65"/><path d="M165.0 2 C151.6 10 143.6 26 138.6 44 C136.8 56 132.0 64 129.0 80" stroke="#7d7d7d" stroke-width="1.1" opacity="0.65"/><path d="M164.1 2 C149.2 10 141.2 26 137.1 44 C135.6 56 132.0 64 128.1 80" stroke="#b3b3b3" stroke-width="1.1" opacity="0.65"/><path d="M163.1 2 C146.8 10 138.8 26 135.7 44 C134.4 56 132.0 64 127.1 80" stroke="#bfbfbf" stroke-width="1.1" opacity="0.65"/><path d="M162.2 2 C144.4 10 136.4 26 134.2 44 C133.2 56 132.0 64 126.2 80" stroke="#848484" stroke-width="1.1" opacity="0.65"/><path d="M161.2 2 C142.0 10 134.0 26 132.8 44 C132.0 56 132.0 64 125.2 80" stroke="#b1b1b1" stroke-width="1.1" opacity="0.65"/><path d="M160.2 2 C139.6 10 131.6 26 131.4 44 C130.8 56 132.0 64 124.2 80" stroke="#868686" stroke-width="1.1" opacity="0.65"/><path d="M168.0 30 C166.0 44 160.0 54 152.0 62 L150.0 90" stroke="#b8b8b8" stroke-width="1" opacity="0.6"/><path d="M165.4 30 C163.4 44 157.4 54 149.4 62 L147.4 90" stroke="#b3b3b3" stroke-width="1" opacity="0.6"/><path d="M162.8 30 C160.8 44 154.8 54 146.8 62 L144.8 90" stroke="#a9a9a9" stroke-width="1" opacity="0.6"/><path d="M160.2 30 C158.2 44 152.2 54 144.2 62 L142.2 90" stroke="#9e9e9e" stroke-width="1" opacity="0.6"/><path d="M157.6 30 C155.6 44 149.6 54 141.6 62 L139.6 90" stroke="#8d8d8d" stroke-width="1" opacity="0.6"/></g></g><g filter="url(#b3)" fill="#000"><ellipse cx="81" cy="112" rx="6" ry="13" opacity="0.95"/><ellipse cx="135" cy="150" rx="4.5" ry="9" opacity="0.95"/><path d="M56 66 C62 52 72 46 78 52 C76 66 70 84 62 94 C56 90 54 78 56 66 Z" opacity="0.85"/></g><g filter="url(#gxz)"><ellipse cx="108" cy="151" rx="3.5" ry="4.5" fill="#fff"/><ellipse cx="123" cy="150" rx="2.5" ry="5" fill="#fff"/><ellipse cx="99" cy="144" rx="3" ry="3" fill="#eee" opacity="0.7"/></g><g fill="none" stroke="#a8a8a8" stroke-width="0.9" opacity="0.65"><path d="M13 0 L13 40 C12 60 8 76 5 86" stroke-dasharray="5 2"/><path d="M26 2 C22 20 18 40 16 60 C14 80 10 100 6 122" stroke-dasharray="4 3"/><path d="M182 2 C180 20 178 36 180 50 C176 60 170 70 170 82 C172 96 178 104 176 116 C172 130 166 138 170 150 L172 164"/><path d="M193 4 C190 24 188 44 187 64 C186 90 186 120 182 140 L178 162" stroke-dasharray="6 2"/></g></svg><!-- left labels -->
<div class="a lg" style="left:9.5px;top:260.8px;font-size:11.9px;color:#222">xy slice  z=239</div>
<div class="a lg" style="left:9.5px;top:440.8px;font-size:11.9px;color:#222">yz slice  x=279</div>
<div class="a lg" style="left:9.5px;top:620.8px;font-size:11.9px;color:#222">xz slice  y=279</div>
<div class="a lg" style="left:4.5px;top:641px;font-size:11.2px;color:#22c3c3;-webkit-text-stroke:0.2px #22c3c3">xy</div>
<div class="a lg" style="left:4.5px;top:667.8px;font-size:11.2px;color:#189a18;-webkit-text-stroke:0.2px #189a18">yz</div>
<div class="a lg" style="left:4.5px;top:695.2px;font-size:11.2px;color:#f0112b;-webkit-text-stroke:0.2px #f0112b">xz</div>
<div class="trk" style="left:11px;top:659.4px;width:193.5px"></div><div class="trkb" style="left:11px;top:659.4px;width:97px"></div><div class="th" style="left:102.5px;top:654.8px"></div>
<div class="trk" style="left:11px;top:686.6px;width:193.5px"></div><div class="trkb" style="left:11px;top:686.6px;width:96px"></div><div class="th" style="left:101.8px;top:682.1px"></div>
<div class="trk" style="left:11px;top:714px;width:193.5px"></div><div class="trkb" style="left:11px;top:714px;width:96px"></div><div class="th" style="left:101.8px;top:709.5px"></div>
<svg style="left:215px;top:64px;width:561px;height:695px" viewBox="215 64 561 695"><defs>
<filter id="cl" x="215" y="64" width="561" height="695" filterUnits="userSpaceOnUse" color-interpolation-filters="sRGB"><feGaussianBlur in="SourceGraphic" stdDeviation="0.9" result="b"/><feTurbulence type="fractalNoise" baseFrequency="0.55 0.75" numOctaves="2" seed="2" result="n"/><feColorMatrix in="n" type="matrix" values="0 0 0 0 1 0 0 0 0 1 0 0 0 0 1 2.4 0 0 0 -0.5" result="a"/><feComposite in="b" in2="a" operator="in" result="c"/><feGaussianBlur in="c" stdDeviation="0.45"/></filter>
<filter id="sp" x="215" y="64" width="561" height="695" filterUnits="userSpaceOnUse" color-interpolation-filters="sRGB"><feGaussianBlur in="SourceGraphic" stdDeviation="1.3" result="b"/><feTurbulence type="fractalNoise" baseFrequency="0.3 0.8" numOctaves="2" seed="12" result="n"/><feColorMatrix in="n" type="matrix" values="0 0 0 0 1 0 0 0 0 1 0 0 0 0 1 2.2 0 0 0 -0.45" result="a"/><feComposite in="b" in2="a" operator="in" result="c"/><feGaussianBlur in="c" stdDeviation="0.4"/></filter>
<filter id="hz" x="215" y="64" width="561" height="695" filterUnits="userSpaceOnUse" color-interpolation-filters="sRGB"><feGaussianBlur in="SourceGraphic" stdDeviation="5" result="b"/><feTurbulence type="fractalNoise" baseFrequency="0.09 0.04" numOctaves="3" seed="8" result="n"/><feColorMatrix in="n" type="matrix" values="0 0 0 0 1 0 0 0 0 1 0 0 0 0 1 1.8 0 0 0 -0.25" result="a"/><feComposite in="b" in2="a" operator="in"/></filter>
<filter id="bl" x="215" y="64" width="561" height="695" filterUnits="userSpaceOnUse" color-interpolation-filters="sRGB"><feGaussianBlur stdDeviation="3"/></filter>
<radialGradient id="rg"><stop offset="0" stop-color="#fff" stop-opacity="1"/><stop offset="0.45" stop-color="#fff" stop-opacity="0.85"/><stop offset="1" stop-color="#fff" stop-opacity="0"/></radialGradient>
</defs><rect x="215.4" y="64.4" width="560" height="693.8" fill="#003366"/><rect x="215.4" y="64.4" width="0.9" height="693.8" fill="#7d95b0"/><g filter="url(#bl)" fill="#001a3d"><path d="M352 207 L611 210 L629 273 L672 283 L696 322 L681 376 L700 436 L706 616 L300 606 L288 524 L297 373 L306 286 Z" opacity="0.16"/><path d="M405 212 L600 214 L604 300 L600 380 L640 432 L652 614 L318 606 L340 500 L398 428 L404 322 Z" opacity="0.20"/></g><g fill="none" stroke="#aeb6bd" stroke-width="1.5" opacity="0.33"><path d="M479 189 C455 240 425 290 405 322 C402 360 405 400 408 440 L414 486"/><path d="M482 192 C458 244 428 292 408 324 C406 360 409 400 411 436" opacity="0.6"/><path d="M513 237 C490 290 468 340 455 376 L448 400"/><path d="M553 186 C535 205 520 225 512 242"/><path d="M566 501 L544 596" stroke-width="1.8" opacity="0.9"/></g><g filter="url(#hz)" fill="#dfe8f0"><path d="M466 500 L596 494 L628 525 L634 612 L448 610 L452 540 Z" opacity="0.24"/><path d="M400 455 L490 440 L492 496 L405 500 Z" opacity="0.10"/><path d="M490 432 L588 432 L600 470 L596 498 L490 496 Z" opacity="0.12"/></g><g filter="url(#sp)" fill="#fff"><ellipse cx="549.5" cy="266" rx="30.5" ry="33.5" fill="none" stroke="#fff" stroke-width="12.5" opacity="0.66"/><ellipse cx="552.5" cy="269.5" rx="18.5" ry="20" opacity="0.66"/><ellipse cx="577" cy="278" rx="7" ry="12" opacity="0.5"/><path d="M551 266 C544 272 541 284 549 291 C556 295 563 290 562 284" fill="none" stroke="#003366" stroke-width="4.5" stroke-linecap="round" opacity="0.75"/></g><g filter="url(#cl)" fill="#fff"><ellipse cx="448" cy="246" rx="20" ry="24" opacity="1" fill="url(#rg)"/><ellipse cx="449" cy="243" rx="10" ry="12" opacity="1" fill="url(#rg)"/><ellipse cx="443" cy="262" rx="9" ry="12" opacity="0.8" fill="url(#rg)"/><ellipse cx="481" cy="245" rx="11" ry="15" opacity="1" fill="url(#rg)"/><ellipse cx="482" cy="243" rx="5" ry="7" opacity="0.9" fill="url(#rg)"/><ellipse cx="505" cy="262" rx="6" ry="24" opacity="0.45" fill="url(#rg)"/><ellipse cx="537" cy="198" rx="17" ry="10" opacity="0.9" fill="url(#rg)"/><ellipse cx="575" cy="203" rx="8" ry="8" opacity="0.8" fill="url(#rg)"/><ellipse cx="522" cy="204" rx="7" ry="6" opacity="0.6" fill="url(#rg)"/><ellipse cx="592" cy="296" rx="7" ry="26" opacity="0.8" fill="url(#rg)"/><ellipse cx="588" cy="345" rx="5" ry="24" opacity="0.5" fill="url(#rg)"/><ellipse cx="583" cy="250" rx="5" ry="16" opacity="0.5" fill="url(#rg)"/><ellipse cx="499" cy="459" rx="8" ry="37" opacity="1" transform="rotate(26 499 459)" fill="url(#rg)"/><ellipse cx="502" cy="469" rx="5.5" ry="20" opacity="1" transform="rotate(26 502 469)"/><ellipse cx="541.5" cy="445" rx="5.5" ry="18" opacity="1" transform="rotate(8 541.5 445)" fill="url(#rg)"/><ellipse cx="558.5" cy="446" rx="5.5" ry="14" opacity="1" transform="rotate(28 558.5 446)" fill="url(#rg)"/><ellipse cx="575" cy="451" rx="6" ry="22" opacity="1" transform="rotate(14 575 451)" fill="url(#rg)"/><ellipse cx="556" cy="481" rx="29" ry="11" opacity="1" transform="rotate(12 556 481)" fill="url(#rg)"/><ellipse cx="566" cy="486" rx="16" ry="6" opacity="1" transform="rotate(8 566 486)"/><ellipse cx="536" cy="459" rx="15" ry="8" opacity="0.85" transform="rotate(45 536 459)" fill="url(#rg)"/><ellipse cx="548" cy="470" rx="14" ry="8" opacity="0.8" transform="rotate(30 548 470)" fill="url(#rg)"/><ellipse cx="490" cy="487" rx="10" ry="5" opacity="0.8" fill="url(#rg)"/><ellipse cx="413" cy="488" rx="17" ry="4.5" opacity="0.85" transform="rotate(-12 413 488)" fill="url(#rg)"/><ellipse cx="440" cy="462" rx="30" ry="6" opacity="0.3" transform="rotate(-8 440 462)" fill="url(#rg)"/><ellipse cx="400" cy="478" rx="18" ry="5" opacity="0.3" transform="rotate(-10 400 478)" fill="url(#rg)"/><ellipse cx="511" cy="567" rx="13" ry="15" opacity="1" fill="url(#rg)"/><ellipse cx="568" cy="572" rx="12" ry="13" opacity="1" fill="url(#rg)"/><ellipse cx="609" cy="571" rx="8" ry="14" opacity="0.85" fill="url(#rg)"/><ellipse cx="624" cy="597" rx="6" ry="13" opacity="0.8" fill="url(#rg)"/><ellipse cx="492" cy="603" rx="50" ry="13" opacity="1" fill="url(#rg)"/><ellipse cx="470" cy="606" rx="26" ry="10" opacity="1" fill="url(#rg)"/><ellipse cx="520" cy="592" rx="26" ry="12" opacity="0.7" fill="url(#rg)"/><ellipse cx="458" cy="600" rx="8" ry="16" opacity="0.9" fill="url(#rg)"/><ellipse cx="556" cy="602" rx="30" ry="9" opacity="0.5" fill="url(#rg)"/><ellipse cx="600" cy="606" rx="20" ry="8" opacity="0.4" fill="url(#rg)"/><ellipse cx="444" cy="604" rx="2.5" ry="13" opacity="1"/><ellipse cx="586.3" cy="531.9" rx="1.5" ry="21.2" opacity="0.4" transform="rotate(-4 586.3 531.9)"/><ellipse cx="612.1" cy="598.0" rx="1.5" ry="16.9" opacity="0.65" transform="rotate(8 612.1 598.0)"/><ellipse cx="595.0" cy="502.8" rx="2.5" ry="10.8" opacity="0.72" transform="rotate(20 595.0 502.8)"/><ellipse cx="619.6" cy="538.1" rx="1.7" ry="9.9" opacity="0.6" transform="rotate(16 619.6 538.1)"/><ellipse cx="541.7" cy="520.1" rx="1.5" ry="9.3" opacity="0.44" transform="rotate(20 541.7 520.1)"/><ellipse cx="603.4" cy="558.3" rx="2.0" ry="9.6" opacity="0.71" transform="rotate(12 603.4 558.3)"/><ellipse cx="576.8" cy="583.3" rx="1.3" ry="15.4" opacity="0.39" transform="rotate(20 576.8 583.3)"/><ellipse cx="615.5" cy="526.6" rx="2.1" ry="22.7" opacity="0.79" transform="rotate(16 615.5 526.6)"/><ellipse cx="609.4" cy="505.5" rx="2.4" ry="23.6" opacity="0.69" transform="rotate(20 609.4 505.5)"/><ellipse cx="541.2" cy="521.5" rx="1.9" ry="19.8" opacity="0.7" transform="rotate(-4 541.2 521.5)"/><ellipse cx="454.1" cy="596.5" rx="1.3" ry="18.1" opacity="0.69" transform="rotate(-4 454.1 596.5)"/><ellipse cx="471.8" cy="596.6" rx="2.5" ry="19.0" opacity="0.38" transform="rotate(-4 471.8 596.6)"/><ellipse cx="590.2" cy="564.1" rx="1.4" ry="16.5" opacity="0.36" transform="rotate(-4 590.2 564.1)"/><ellipse cx="605.8" cy="590.5" rx="2.3" ry="17.2" opacity="0.38" transform="rotate(-4 605.8 590.5)"/><ellipse cx="476.6" cy="581.2" rx="2.5" ry="19.2" opacity="0.46" transform="rotate(-4 476.6 581.2)"/><ellipse cx="471.1" cy="538.2" rx="1.9" ry="22.1" opacity="0.41" transform="rotate(16 471.1 538.2)"/><ellipse cx="487.3" cy="582.1" rx="1.4" ry="10.4" opacity="0.37" transform="rotate(12 487.3 582.1)"/><ellipse cx="564.6" cy="575.4" rx="2.6" ry="17.2" opacity="0.68" transform="rotate(-4 564.6 575.4)"/><ellipse cx="534.2" cy="526.2" rx="2.4" ry="9.6" opacity="0.63" transform="rotate(16 534.2 526.2)"/><ellipse cx="542.9" cy="528.2" rx="2.4" ry="8.3" opacity="0.57" transform="rotate(8 542.9 528.2)"/><ellipse cx="455.2" cy="513.9" rx="1.3" ry="22.1" opacity="0.58" transform="rotate(8 455.2 513.9)"/><ellipse cx="582.9" cy="516.2" rx="2.5" ry="14.1" opacity="0.56" transform="rotate(-4 582.9 516.2)"/><ellipse cx="500" cy="584" rx="42" ry="15" opacity="0.5" fill="url(#rg)"/><ellipse cx="470" cy="590" rx="20" ry="14" opacity="0.6" fill="url(#rg)"/><ellipse cx="585" cy="590" rx="36" ry="14" opacity="0.35" fill="url(#rg)"/><ellipse cx="435.1" cy="503.6" rx="5.4" ry="2.8" opacity="0.49" transform="rotate(-14 435.1 503.6)"/><ellipse cx="411.2" cy="510.9" rx="3.5" ry="2.3" opacity="0.39" transform="rotate(-10 411.2 510.9)"/><ellipse cx="458.5" cy="517.3" rx="7.5" ry="3.0" opacity="0.44" transform="rotate(-6 458.5 517.3)"/><ellipse cx="457.7" cy="489.0" rx="5.4" ry="2.3" opacity="0.59" transform="rotate(-14 457.7 489.0)"/><ellipse cx="420.3" cy="497.2" rx="6.4" ry="2.6" opacity="0.39" transform="rotate(-10 420.3 497.2)"/><ellipse cx="410.3" cy="439.3" rx="3.8" ry="2.9" opacity="0.51" transform="rotate(-10 410.3 439.3)"/><ellipse cx="471.5" cy="483.0" rx="6.4" ry="2.5" opacity="0.32" transform="rotate(-10 471.5 483.0)"/><ellipse cx="466.2" cy="516.5" rx="3.7" ry="2.5" opacity="0.34" transform="rotate(-10 466.2 516.5)"/><ellipse cx="446.7" cy="460.9" rx="7.1" ry="2.6" opacity="0.47" transform="rotate(-14 446.7 460.9)"/><ellipse cx="392.3" cy="493.2" rx="3.5" ry="2.2" opacity="0.49" transform="rotate(-10 392.3 493.2)"/><ellipse cx="388.5" cy="497.4" rx="3.9" ry="2.1" opacity="0.59" transform="rotate(-10 388.5 497.4)"/><ellipse cx="425.3" cy="439.9" rx="5.3" ry="1.7" opacity="0.58" transform="rotate(-6 425.3 439.9)"/><ellipse cx="461.5" cy="503.6" rx="8.6" ry="2.4" opacity="0.55" transform="rotate(-6 461.5 503.6)"/><ellipse cx="469.6" cy="437.9" rx="3.3" ry="3.0" opacity="0.52" transform="rotate(-6 469.6 437.9)"/></g><g fill="#eef2f6"><circle cx="521" cy="327" r="1.8" opacity="0.85"/><circle cx="579" cy="330" r="1.4" opacity="0.85"/><circle cx="505" cy="345" r="1.8" opacity="0.85"/><circle cx="564" cy="312" r="1.4" opacity="0.85"/><circle cx="553.5" cy="387" r="2.8" opacity="0.85"/><circle cx="526" cy="383" r="1.4" opacity="0.85"/><circle cx="476" cy="300" r="1.1" opacity="0.85"/><circle cx="430" cy="400" r="1.1" opacity="0.85"/><circle cx="470" cy="470" r="1.3" opacity="0.85"/><circle cx="440" cy="512" r="1.3" opacity="0.85"/><circle cx="448" cy="548" r="1.3" opacity="0.85"/><circle cx="468" cy="563" r="1.5" opacity="0.85"/><circle cx="598" cy="452" r="1.3" opacity="0.85"/><circle cx="601" cy="530" r="1.6" opacity="0.85"/><circle cx="507" cy="523" r="2.0" opacity="0.85"/><circle cx="536" cy="530" r="1.7" opacity="0.85"/><circle cx="497" cy="577" r="1.7" opacity="0.85"/><circle cx="412" cy="442" r="1.2" opacity="0.85"/><circle cx="460" cy="520" r="1.2" opacity="0.85"/><circle cx="590" cy="520" r="1.2" opacity="0.85"/><circle cx="546.5" cy="408" r="2.6" opacity="0.85"/><circle cx="520" cy="236" r="1.6" opacity="0.85"/><ellipse cx="568" cy="407.5" rx="4.2" ry="5.2" opacity="0.95"/></g><g fill="none" stroke-width="1" stroke-linejoin="round" shape-rendering="crispEdges"><path d="M229.5 606.3 L243.8 174.3 L752.6 188.4" stroke="#a9b4bf"/><path d="M230.2 606.7 L739.7 620.9 L752.2 200" stroke="#05080c"/><path d="M243.8 174.3 L252.3 201.5 M752.6 188.4 L761.3 216.5 M229.5 606.3 L239.6 635.4" stroke="#a9b4bf"/><path d="M743.9 636 L747.4 649.6" stroke="#05080c"/><path d="M244.7 179.4 L754.3 195 L741.5 628.7 L233 613.5 Z" stroke="#e0bb10"/><path d="M247.8 186.7 L756.8 202.5 L743.9 636 L234 620.9 Z" stroke="#de1420"/><path d="M252.3 201.5 L761.3 216.5 L747.4 649.6 L239.6 635.4 Z" stroke="#b4bcc6"/><path d="M237.1 390.4 L746.1 405 L754.4 432.2 L245.7 417 Z" stroke="#14cfe0"/><path d="M497.4 181.3 L506.1 208 L493.3 642.3 L484.6 615.5 Z" stroke="#12d41a"/></g><g font-family="Liberation Sans, sans-serif" fill="#f3c400" letter-spacing="0"><text x="229" y="158.3" font-size="16.5">0</text><text x="236.8" y="186.2" font-size="16">y</text><text x="761.3" y="174" font-size="16.5">x</text><text x="216.3" y="614.8" font-size="16.5">z</text></g></svg><!-- middle column: ball, Hide TF, distance + scale sliders -->
<svg style="left:792px;top:68px;width:16px;height:16px" viewBox="0 0 16 16"><defs><radialGradient id="gb" cx="0.38" cy="0.32" r="0.7"><stop offset="0" stop-color="#b9ff6a"/><stop offset="0.22" stop-color="#3fdc10"/><stop offset="0.7" stop-color="#1f9a07"/><stop offset="1" stop-color="#156004"/></radialGradient></defs><circle cx="8.2" cy="7.8" r="6.9" fill="url(#gb)"/></svg>
<div class="btn" style="left:778px;top:87px;width:45.5px;height:36.5px;border-radius:3.5px"><span style="left:0;width:43px;top:3.5px;text-align:center">Hide</span><span style="left:0;width:43px;top:18.5px;text-align:center">TF</span></div>
<div class="vtrk" style="left:799px;top:138px;height:76px"></div><div class="vtrkb" style="left:799px;top:213px;height:152.5px"></div><div class="th" style="left:794.5px;top:207.8px"></div>
<div class="a" style="left:770px;width:60px;text-align:center;top:379px">153.0</div>
<div class="a lg" style="left:770px;width:60px;text-align:center;top:397.3px;font-size:10.7px">Distance</div>
<div class="vtrk" style="left:799px;top:425px;height:224px"></div><div class="vtrkb" style="left:799px;top:648px;height:63.5px"></div>
<div style="position:absolute;left:791.2px;top:639.4px;width:17.6px;height:17.6px;border-radius:50%;background:rgba(11,132,230,0.28)"></div><div class="th" style="left:794.5px;top:642.7px"></div>
<div class="a" style="left:770px;width:60px;text-align:center;top:726px">1.0</div>
<div class="a" style="left:770px;width:60px;text-align:center;top:744px">Scale</div>
<!-- right panel -->
<div class="a" style="left:858.2px;top:69.8px">Transfer Function (TF): Color &amp; Alpha</div>
<div class="box" style="left:844px;top:89.5px;width:217.5px;height:26.5px;border-radius:3px"><span style="left:5.5px;top:5.5px">Grayscale (1)</span><svg class="chev" style="left:200px;top:9.5px" viewBox="0 0 12 8"><path d="M1.5 1.8 L6 6 L10.5 1.8" fill="none" stroke="#7d7d7d" stroke-width="1.1"/></svg></div>
<div class="a" style="left:850.4px;top:123.5px">Draw LUT</div>
<div class="a" style="left:908.7px;top:123.5px">RGB</div>
<div class="rad" style="left:937.6px;top:124px;border-color:#3b97e8"><i style="position:absolute;left:2.2px;top:2.2px;width:6.6px;height:6.6px;border-radius:50%;background:#1f89e5"></i></div>
<div class="a" style="left:959.2px;top:123.5px">R</div><div class="rad" style="left:971px;top:124px"></div>
<div class="a" style="left:992.7px;top:123.5px">G</div><div class="rad" style="left:1005.7px;top:124px"></div>
<div class="a" style="left:1027.5px;top:123.5px">B</div><div class="rad" style="left:1039.2px;top:124px"></div>
<svg style="left:836.4px;top:144.5px;width:232.4px;height:116.3px" viewBox="0 0 232.4 116.3"><rect width="232.4" height="116.3" fill="#323232"/><path d="M0 115.8 L232.4 0.5" stroke="#f4f4f4" stroke-width="1.15" fill="none"/></svg>
<div style="position:absolute;box-sizing:border-box;left:836.4px;top:266.2px;width:232.4px;height:15.2px;border:1px solid #b9b9b9;background:linear-gradient(90deg,#000,#fff)"></div>
<div class="a" style="left:843.3px;top:294.5px">1D</div>
<div class="a" style="left:878.7px;top:294.5px">2D Grad</div>
<div class="a" style="left:945px;top:294.5px">2D MD</div>
<div class="a" style="left:1003.3px;top:294.5px">3D Fill</div>
<div style="position:absolute;left:832px;top:315.2px;width:241.5px;height:1.2px;background:#d9d9d9"></div>
<div style="position:absolute;left:832px;top:314.4px;width:36.2px;height:2.1px;background:#58a6e4"></div>
<div class="a lg" style="left:846.4px;top:325.5px;font-size:11.9px;color:#222">Draw the alpha graph of the 1D-TF(lum)</div>
<svg style="left:836.3px;top:363.8px;width:232.8px;height:116.2px" viewBox="0 0 232.8 116.2"><rect width="232.8" height="116.2" fill="#fff"/><path d="M6.9 116.2 L6.9 4.4 L7.8 5.0 L8.7 6.7 L9.6 8.4 L10.5 10.9 L11.4 12.3 L12.3 13.3 L13.2 14.6 L14.1 13.2 L15.0 11.5 L15.9 13.4 L16.8 15.9 L17.7 19.0 L18.6 22.0 L19.5 23.5 L20.4 28.8 L21.3 32.8 L22.2 24.5 L23.1 19.8 L24.0 19.4 L24.9 21.4 L25.8 18.5 L26.7 21.2 L27.6 19.5 L28.5 19.2 L29.4 19.2 L30.3 19.9 L31.2 21.7 L32.1 19.8 L33.0 21.2 L33.9 21.5 L34.8 20.7 L35.7 21.4 L36.6 20.0 L37.5 20.1 L38.4 20.7 L39.3 22.3 L40.2 21.6 L41.1 21.4 L42.0 22.4 L42.9 22.1 L43.8 21.7 L44.7 23.4 L45.6 23.2 L46.5 21.9 L47.4 23.1 L48.3 23.0 L49.2 24.3 L50.1 23.9 L51.0 22.6 L51.9 25.0 L52.8 22.3 L53.7 23.4 L54.6 24.6 L55.5 22.8 L56.4 24.0 L57.3 22.7 L58.2 24.8 L59.1 25.2 L60.0 24.7 L60.9 25.9 L61.8 24.2 L62.7 25.6 L63.6 25.5 L64.5 25.6 L65.4 25.4 L66.3 26.8 L67.2 27.3 L68.1 25.9 L69.0 26.7 L69.9 24.9 L70.8 27.1 L71.7 27.1 L72.6 28.4 L73.5 28.0 L74.4 26.5 L75.3 27.0 L76.2 28.0 L77.1 26.1 L78.0 27.7 L78.9 26.9 L79.8 26.9 L80.7 26.9 L81.6 29.4 L82.5 27.5 L83.4 28.0 L84.3 28.7 L85.2 30.4 L86.1 28.0 L87.0 29.3 L87.9 29.8 L88.8 31.1 L89.7 31.0 L90.6 31.3 L91.5 29.6 L92.4 30.2 L93.3 30.2 L94.2 32.1 L95.1 32.5 L96.0 30.0 L96.9 30.3 L97.8 30.6 L98.7 30.8 L99.6 31.8 L100.5 32.3 L101.4 31.4 L102.3 30.7 L103.2 32.2 L104.1 32.2 L105.0 33.0 L105.9 34.4 L106.8 33.8 L107.7 33.4 L108.6 33.9 L109.5 34.2 L110.4 32.4 L111.3 35.3 L112.2 35.1 L113.1 35.5 L114.0 35.5 L114.9 34.3 L115.8 34.6 L116.7 33.8 L117.6 35.7 L118.5 34.0 L119.4 34.2 L120.3 34.9 L121.2 34.9 L122.1 35.7 L123.0 34.9 L123.9 35.0 L124.8 35.6 L125.7 35.7 L126.6 36.7 L127.5 35.8 L128.4 38.7 L129.3 38.1 L130.2 36.8 L131.1 37.3 L132.0 37.8 L132.9 38.0 L133.8 37.4 L134.7 39.9 L135.6 40.6 L136.5 39.1 L137.4 39.3 L138.3 38.2 L139.2 38.5 L140.1 39.4 L141.0 39.4 L141.9 41.4 L142.8 39.4 L143.7 39.2 L144.6 42.3 L145.5 41.2 L146.4 40.1 L147.3 41.6 L148.2 40.1 L149.1 41.9 L150.0 43.5 L150.9 43.4 L151.8 43.0 L152.7 41.8 L153.6 42.4 L154.5 41.9 L155.4 44.1 L156.3 43.5 L157.2 44.5 L158.1 43.3 L159.0 43.1 L159.9 45.2 L160.8 46.0 L161.7 45.8 L162.6 45.8 L163.5 46.0 L164.4 46.0 L165.3 44.6 L166.2 45.7 L167.1 45.4 L168.0 44.5 L168.9 44.7 L169.8 45.7 L170.7 45.9 L171.6 47.5 L172.5 48.5 L173.4 47.1 L174.3 48.8 L175.2 49.2 L176.1 49.3 L177.0 47.6 L177.9 47.4 L178.8 47.6 L179.7 47.6 L180.6 47.8 L181.5 49.3 L182.4 50.3 L183.3 50.2 L184.2 49.2 L185.1 49.9 L186.0 50.5 L186.9 48.4 L187.8 50.4 L188.7 51.3 L189.6 51.0 L190.5 51.1 L191.4 50.3 L192.3 49.5 L193.2 51.6 L194.1 50.3 L195.0 51.9 L195.9 52.6 L196.8 50.9 L197.7 51.0 L198.6 52.9 L199.5 52.3 L200.4 50.7 L201.3 50.7 L202.2 50.9 L203.1 53.3 L204.0 53.1 L204.9 51.0 L205.8 53.2 L206.7 53.8 L207.6 52.8 L208.5 51.8 L209.4 52.5 L210.3 51.2 L211.2 50.9 L212.1 54.0 L213.0 53.0 L213.9 52.6 L214.8 54.0 L215.7 52.4 L216.6 53.9 L217.5 53.7 L218.4 51.8 L219.3 52.0 L220.2 52.2 L221.1 52.0 L222.0 53.2 L222.9 52.2 L223.8 52.7 L224.7 51.9 L225.6 54.4 L226.5 52.6 L227.4 53.0 L228.3 53.5 L229.2 54.5 L230.1 53.0 L231.0 54.7 L231.9 53.4 L232.8 116.2 Z" fill="#777"/><path d="M6.9 116.2 L7.2 41.0 L8.6 44.0 L9.4 70.0 L10.2 88.0 L11.0 96.0 L12.2 102.0 L13.6 106.0 L14.5 85.0 L15.4 86.0 L16.0 104.0 L17.5 110.0 L20.5 113.0 L21.5 105.5 L22.4 105.8 L23.5 105.9 L24.6 104.6 L25.7 105.9 L26.8 105.3 L27.9 104.9 L29.0 107.3 L30.1 105.7 L31.2 106.6 L32.3 107.4 L33.4 107.1 L34.5 106.6 L35.6 107.2 L36.7 107.4 L37.8 108.2 L38.9 106.4 L40.0 107.8 L41.1 107.0 L42.2 107.2 L43.3 108.7 L44.4 108.1 L45.5 108.4 L46.6 109.1 L47.7 109.6 L48.8 108.4 L49.9 109.0 L51.0 108.8 L52.1 109.0 L53.2 109.6 L54.3 109.0 L55.4 109.4 L56.5 109.3 L57.6 110.8 L58.7 110.2 L59.8 110.8 L60.9 111.1 L62.0 109.3 L63.1 110.3 L64.2 111.5 L65.3 111.3 L66.4 109.5 L67.5 109.5 L68.6 110.5 L69.7 109.6 L70.8 110.2 L71.9 109.9 L73.0 111.7 L74.1 112.1 L75.2 112.5 L76.3 110.6 L77.4 112.3 L78.5 112.2 L79.6 110.9 L80.7 113.1 L81.8 113.4 L82.9 111.5 L84.0 113.6 L85.1 112.2 L86.2 112.6 L87.3 114.1 L88.4 113.8 L89.5 112.0 L90.6 112.9 L91.7 113.2 L92.8 112.9 L93.9 112.6 L95.0 113.0 L96.1 114.3 L97.2 112.4 L98.3 114.0 L99.4 113.8 L100.5 112.8 L101.6 113.8 L102.7 114.7 L103.8 114.5 L104.9 113.4 L106.0 116.1 L107.1 115.6 L108.2 116.2 L109.3 114.0 L110.4 114.5 L111.5 114.0 L112.6 116.2 L113.7 114.9 L114.8 114.6 L115.9 115.6 L117.0 116.2 L120.0 116.2 Z" fill="#000"/><rect x="0" y="0" width="1" height="116.2" fill="#222"/><path d="M0.0 115.6 L12.2 115.6 L20.0 113.1 L40.0 106.5 L60.0 102.8 L74.7 100.1 L95.0 96.6 L109.4 93.8 L125.0 89.1 L141.8 83.4 L155.0 78.6 L169.6 73.0 L180.0 66.1 L190.5 57.9 L200.0 51.6 L211.3 44.0 L217.0 38.6 L221.7 32.5 L226.0 24.6 L231.0 15.8 L231.2 57.9" fill="none" stroke="#ff6a00" stroke-width="1.1" stroke-linejoin="round"/></svg>
<div class="trk" style="left:850.4px;top:491px;width:105px"></div><div class="trkb" style="left:850.4px;top:491px;width:52px"></div><div class="th" style="left:897.4px;top:486.5px"></div>
<div class="a lg" style="left:861.2px;top:498.6px;font-size:9.9px;color:#222">global alpha offset</div>
<div class="btn" style="left:971.7px;top:489.7px;width:44.2px;height:17.6px;border-radius:3px"><span class="lg" style="left:0;width:42.2px;top:0.8px;text-align:center;font-size:11.3px">auto</span></div>
<div class="btn" style="left:1021.6px;top:489.7px;width:44.4px;height:17.6px;border-radius:3px"><span class="lg" style="left:0;width:42.4px;top:0.8px;text-align:center;font-size:11.3px">clear</span></div>
<!-- light -->
<div style="position:absolute;box-sizing:border-box;left:828.3px;top:551.8px;width:12.3px;height:12.3px;border:1px solid #bdbdbd;border-radius:3px;background:#fff"></div>
<div class="a" style="left:844.8px;top:551px">Light</div>
<div style="position:absolute;left:884.3px;top:572px;width:50px;height:50px;border-radius:50%;background:#404040"></div>
<div class="a lg" style="left:900px;width:86.8px;text-align:right;top:552.6px;font-size:9.9px;color:#222">object color</div>
<div class="a lg" style="left:900px;width:86.8px;text-align:right;top:573.4px;font-size:9.9px;color:#222">ambient</div>
<div class="a lg" style="left:900px;width:86.8px;text-align:right;top:594.3px;font-size:9.9px;color:#222">diffuse</div>
<div class="a lg" style="left:900px;width:86.8px;text-align:right;top:615.2px;font-size:9.9px;color:#222">specular</div>
<div class="a lg" style="left:900px;width:86.8px;text-align:right;top:636.2px;font-size:9.9px;color:#222">shine</div>
<div class="trkd" style="left:996.5px;top:557.5px;width:74.3px"></div><div class="thd" style="left:1009.5px;top:553px"></div>
<div class="trkd" style="left:996.5px;top:578.2px;width:74.3px"></div><div class="thd" style="left:1027.8px;top:573.7px"></div>
<div class="trkd" style="left:996.5px;top:599.2px;width:74.3px"></div><div class="thd" style="left:1027.8px;top:594.7px"></div>
<div class="trkd" style="left:996.5px;top:620.1px;width:74.3px"></div><div class="thd" style="left:1027.8px;top:615.6px"></div>
<div class="trkd" style="left:996.5px;top:641.1px;width:74.3px"></div><div class="thd" style="left:1026.8px;top:636.6px"></div>
<!-- bottom bar -->
<div class="a" style="left:124.5px;top:771px;letter-spacing:0.15px">Rotation: x:</div>
<div class="box" style="left:190px;top:768px;width:72px;height:20.5px;border-radius:3px"><span style="right:25px;top:2.5px">-87</span><i style="position:absolute;left:52px;top:0;width:1px;height:18.5px;background:#d6d6d6"></i><svg style="left:56px;top:3px;width:12px;height:13px" viewBox="0 0 12 13"><path d="M2.2 5 L6 1.6 L9.8 5 M2.2 8 L6 11.4 L9.8 8" fill="none" stroke="#6e6e6e" stroke-width="1"/></svg></div>
<div class="a" style="left:270px;top:771px">y:</div>
<div class="box" style="left:284.5px;top:768px;width:71.5px;height:20.5px;border-radius:3px"><span style="right:25px;top:2.5px">-1</span><i style="position:absolute;left:51px;top:0;width:1px;height:18.5px;background:#d6d6d6"></i><svg style="left:55px;top:3px;width:12px;height:13px" viewBox="0 0 12 13"><path d="M2.2 5 L6 1.6 L9.8 5 M2.2 8 L6 11.4 L9.8 8" fill="none" stroke="#6e6e6e" stroke-width="1"/></svg></div>
<div class="a" style="left:364px;top:771px">z:</div>
<div class="box" style="left:378px;top:768px;width:71.5px;height:20.5px;border-radius:3px"><span style="right:25px;top:2.5px">2</span><i style="position:absolute;left:51.5px;top:0;width:1px;height:18.5px;background:#d6d6d6"></i><svg style="left:55.5px;top:3px;width:12px;height:13px" viewBox="0 0 12 13"><path d="M2.2 5 L6 1.6 L9.8 5 M2.2 8 L6 11.4 L9.8 8" fill="none" stroke="#6e6e6e" stroke-width="1"/></svg></div>
<div class="btn" style="left:475px;top:768px;width:64.5px;height:20.5px"><span style="left:0;width:62.5px;top:2px;text-align:center">xy</span></div>
<div class="btn" style="left:540.5px;top:768px;width:64.5px;height:20.5px"><span style="left:0;width:62.5px;top:2px;text-align:center">yz</span></div>
<div class="btn" style="left:606px;top:768px;width:64.5px;height:20.5px"><span style="left:0;width:62.5px;top:2px;text-align:center">xz</span></div>
<div class="a" style="left:697.5px;top:771px">Show:</div>
<div class="a" style="left:737.5px;top:771px">Axes</div>
<div class="cb" style="left:767.7px;top:771px"><svg style="left:0;top:0;width:10.4px;height:10.4px" viewBox="0 0 10.4 10.4"><path d="M2.4 5.4 L4.4 7.8 L8.1 2.2" fill="none" stroke="#2f8fe4" stroke-width="1.3" stroke-linecap="round" stroke-linejoin="round"/></svg></div>
<div class="a" style="left:789px;top:771px;letter-spacing:0">Clipping</div>
<div class="cb" style="left:837px;top:771px"><svg style="left:0;top:0;width:10.4px;height:10.4px" viewBox="0 0 10.4 10.4"><path d="M2.4 5.4 L4.4 7.8 L8.1 2.2" fill="none" stroke="#2f8fe4" stroke-width="1.3" stroke-linecap="round" stroke-linejoin="round"/></svg></div>
<div class="a" style="left:858.7px;top:771px;letter-spacing:-0.1px">Slice positions</div>
<div class="cb" style="left:940px;top:771px"><svg style="left:0;top:0;width:10.4px;height:10.4px" viewBox="0 0 10.4 10.4"><path d="M2.4 5.4 L4.4 7.8 L8.1 2.2" fill="none" stroke="#2f8fe4" stroke-width="1.3" stroke-linecap="round" stroke-linejoin="round"/></svg></div>
<div class="badge" style="left:941px;top:412.6px">1</div><div class="badge" style="left:767px;top:199.2px">2</div><div class="badge" style="left:596.3px;top:240.4px">3</div></div></body></html>
